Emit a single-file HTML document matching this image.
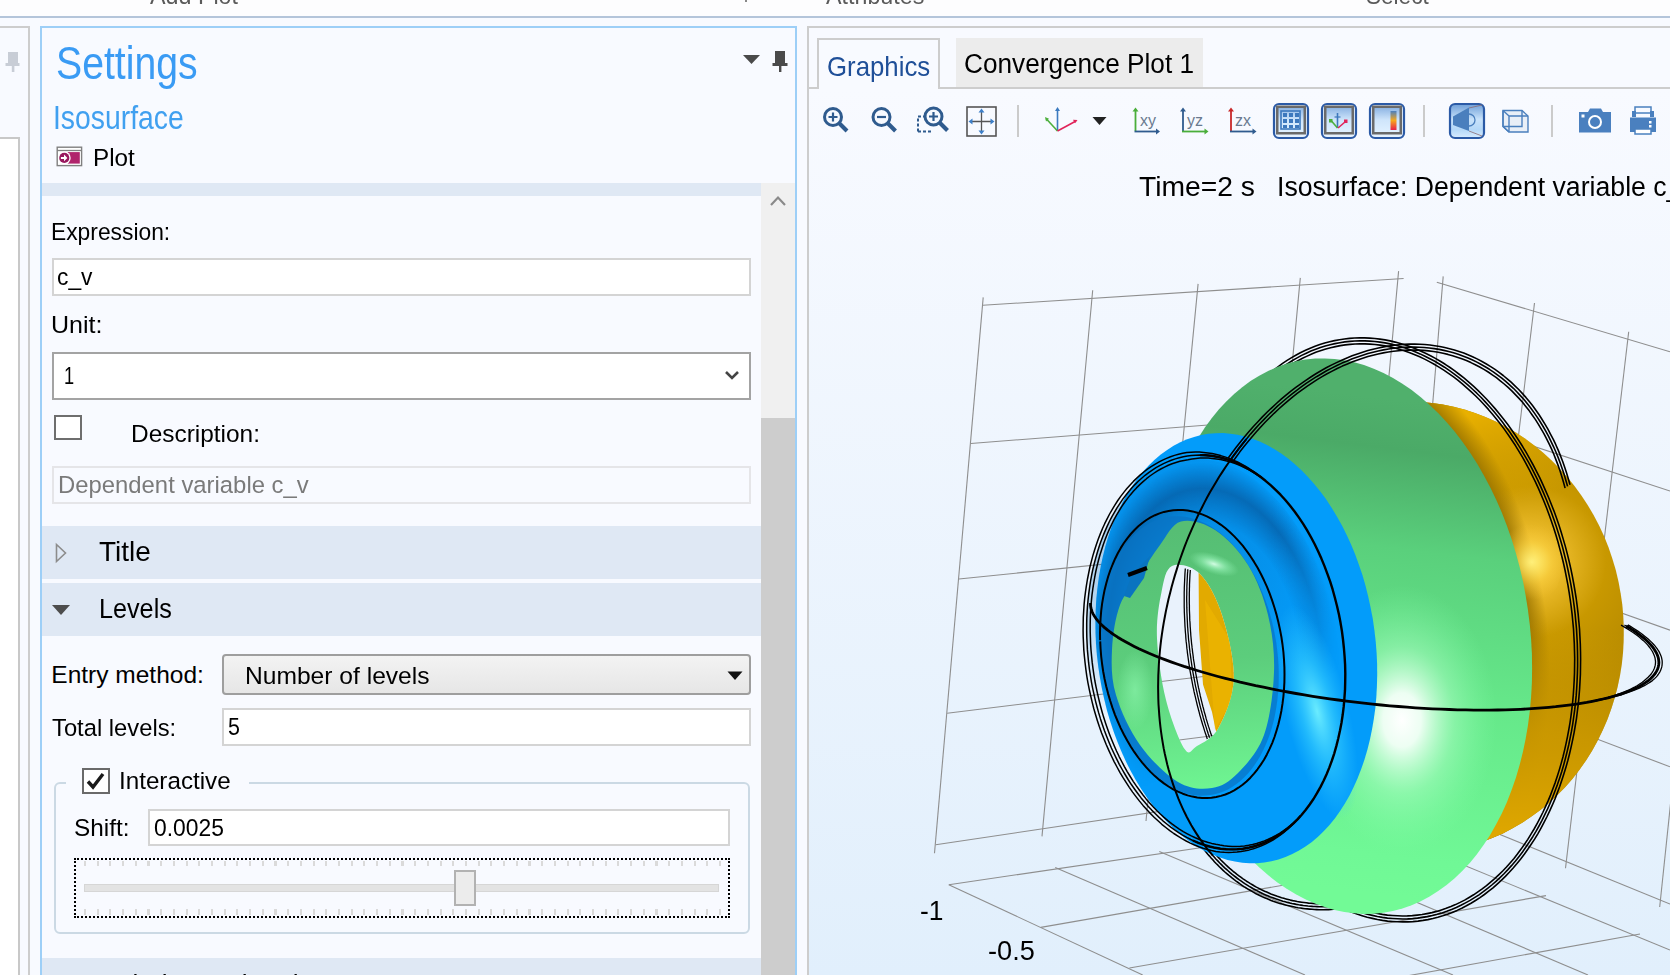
<!DOCTYPE html>
<html><head><meta charset="utf-8">
<style>
*{box-sizing:border-box}
html,body{margin:0;padding:0;width:1670px;height:975px;overflow:hidden;background:#f8faff;font-family:"Liberation Sans",sans-serif;color:#000}
.a{position:absolute}
.t{position:absolute;white-space:pre;line-height:1;transform-origin:0 0}
.fld{position:absolute;background:#fff;border:2px solid #d4d4d4}
</style></head><body>
<!-- top ribbon strip -->
<div class="a" style="left:0;top:0;width:1670px;height:16px;background:#fdfdfe"></div>
<div class="t" style="left:150px;top:-16px;font-size:24px;color:#5a5a5a;transform:scaleX(0.97)">Add Plot</div>
<div class="t" style="left:826px;top:-16px;font-size:24px;color:#5a5a5a;transform:scaleX(0.97)">Attributes</div>
<div class="t" style="left:1366px;top:-16px;font-size:24px;color:#5a5a5a;transform:scaleX(0.94)">Select</div>
<div class="a" style="left:0;top:16px;width:1670px;height:2px;background:#b4c5da"></div>
<div class="a" style="left:745px;top:0;width:2px;height:2px;background:#888"></div>

<!-- left collapsed panel -->
<div class="a" style="left:-4px;top:26px;width:34px;height:960px;border:2px solid #cdcdcd"></div>
<div class="a" style="left:-4px;top:137px;width:24px;height:860px;border:2px solid #c8c8c8;background:#fff"></div>
<svg class="a" style="left:5px;top:51px" width="16" height="22"><rect x="3" y="1" width="10" height="12" fill="#c8cdd6"/><rect x="0.5" y="12" width="14" height="3" fill="#c8cdd6"/><rect x="6.8" y="14" width="2.6" height="7" fill="#c8cdd6"/></svg>

<!-- settings panel -->
<div class="a" style="left:40px;top:26px;width:757px;height:960px;border:2px solid #9dcff7"></div>
<div class="t" style="left:56.2px;top:40px;font-size:46.37px;color:#3a9bf4;transform:scaleX(0.845)">Settings</div>
<div class="t" style="left:53.2px;top:101.6px;font-size:32.41px;color:#40a0f0;transform:scaleX(0.874)">Isosurface</div>
<svg class="a" style="left:56px;top:146px" width="27" height="21"><rect x="1.2" y="1.2" width="24.4" height="18.4" fill="#fff" stroke="#808080" stroke-width="1.4"/><path d="M1.2 4.5H25.6" stroke="#808080" stroke-width="1.3"/><rect x="11.7" y="6.1" width="12.1" height="11.5" fill="#b0246c"/><circle cx="8.3" cy="11.9" r="6.4" fill="#fff"/><circle cx="8.3" cy="11.9" r="5.1" fill="#98185e"/><path d="M4.9 10.9h3.1v-2.3l3.4 3.3-3.4 3.3v-2.3H4.9z" fill="#fff"/></svg>
<div class="t" style="left:93.3px;top:146.6px;font-size:23.5px;color:#000;transform:scaleX(1.032)">Plot</div>
<!-- dropdown + pin -->
<svg class="a" style="left:740px;top:50px" width="50" height="25"><path d="M3 5h17l-8.5 9z" fill="#4a4a4a"/><rect x="35" y="1" width="10" height="13" fill="#4a4a4a"/><rect x="32.5" y="13" width="15" height="3" fill="#4a4a4a"/><rect x="39" y="15" width="2.4" height="7" fill="#4a4a4a"/></svg>

<!-- header band -->
<div class="a" style="left:42px;top:183px;width:719px;height:13px;background:#dfe8f4"></div>
<!-- scrollbar -->
<div class="a" style="left:761px;top:183px;width:34px;height:792px;background:#f0f0f0"></div>
<div class="a" style="left:761px;top:418px;width:34px;height:557px;background:#cdcdcd"></div>
<svg class="a" style="left:768px;top:192px" width="20" height="16"><path d="M3 13L10 5.5 17 13" stroke="#8a8a8a" stroke-width="2.2" fill="none"/></svg>

<div class="t" style="left:51.2px;top:219.6px;font-size:24.5px;transform:scaleX(0.931)">Expression:</div>
<div class="fld" style="left:52px;top:258px;width:699px;height:38px"></div>
<div class="t" style="left:57px;top:264.7px;font-size:24.5px;transform:scaleX(0.93)">c_v</div>
<div class="t" style="left:51px;top:313.1px;font-size:24.5px;transform:scaleX(1.022)">Unit:</div>
<div class="fld" style="left:52px;top:352px;width:699px;height:48px;border-color:#a3a3a3"></div>
<div class="t" style="left:64.3px;top:364.3px;font-size:24.5px;transform:scaleX(0.745)">1</div>
<svg class="a" style="left:724px;top:368px" width="16" height="14"><path d="M2 4l6 6 6-6" stroke="#444" stroke-width="2.6" fill="none"/></svg>
<div class="fld" style="left:54px;top:415px;width:28px;height:25px;border-color:#6e6e6e"></div>
<div class="t" style="left:131.2px;top:421.8px;font-size:24.5px;transform:scaleX(0.997)">Description:</div>
<div class="fld" style="left:52px;top:466px;width:699px;height:38px;border-color:#e5e5e8;background:#f8faff"></div>
<div class="t" style="left:57.5px;top:472.9px;font-size:24.5px;color:#7a7a7a;transform:scaleX(0.974)">Dependent variable c_v</div>

<!-- Title band -->
<div class="a" style="left:42px;top:526px;width:719px;height:53px;background:#dfe8f4"></div>
<svg class="a" style="left:54px;top:542px" width="14" height="22"><path d="M2.5 2.5L11.5 11 2.5 19.5z" fill="none" stroke="#8c8c8c" stroke-width="1.6"/></svg>
<div class="t" style="left:99.3px;top:538.1px;font-size:27.6px;transform:scaleX(1.014)">Title</div>
<div class="a" style="left:42px;top:583px;width:719px;height:53px;background:#dfe8f4"></div>
<svg class="a" style="left:50px;top:602px" width="22" height="14"><path d="M2 3h18L11 13z" fill="#4d4d4d"/></svg>
<div class="t" style="left:98.9px;top:595px;font-size:27.6px;transform:scaleX(0.913)">Levels</div>

<div class="t" style="left:51.3px;top:663.2px;font-size:24.5px">Entry method:</div>
<div class="a" style="left:222px;top:654px;width:529px;height:41px;border:2px solid #9e9e9e;border-radius:4px;background:linear-gradient(#f3f3f3,#e6e6e6)"></div>
<div class="t" style="left:245.3px;top:663.5px;font-size:24.5px;transform:scaleX(1.004)">Number of levels</div>
<svg class="a" style="left:726px;top:670px" width="18" height="12"><path d="M1.5 1.5h15L9 10z" fill="#111"/></svg>
<div class="t" style="left:52.2px;top:716.1px;font-size:24.5px;transform:scaleX(0.97)">Total levels:</div>
<div class="fld" style="left:222px;top:708px;width:529px;height:38px"></div>
<div class="t" style="left:228.4px;top:714.8px;font-size:24.5px;transform:scaleX(0.875)">5</div>

<!-- group box -->
<div class="a" style="left:54px;top:782px;width:696px;height:152px;border:2px solid #cbd9e4;border-radius:6px"></div>
<div class="a" style="left:66px;top:778px;width:183px;height:10px;background:#f8faff"></div>
<div class="fld" style="left:82px;top:768px;width:28px;height:26px;border-color:#6a6a6a"></div>
<svg class="a" style="left:84px;top:770px" width="24" height="22"><path d="M4 11.5l5 5.5 10-13" stroke="#1a1a1a" stroke-width="3.4" fill="none"/></svg>
<div class="t" style="left:119.3px;top:769.3px;font-size:24.5px;transform:scaleX(0.988)">Interactive</div>
<div class="t" style="left:74px;top:815.5px;font-size:24.5px;transform:scaleX(0.994)">Shift:</div>
<div class="fld" style="left:148px;top:809px;width:582px;height:37px"></div>
<div class="t" style="left:153.7px;top:815.5px;font-size:24.5px;transform:scaleX(0.933)">0.0025</div>
<div class="a" style="left:74px;top:858px;width:656px;height:60px;border:2px dotted #000"></div>
<div class="a" style="left:84px;top:861px;width:640px;height:5px;background:repeating-linear-gradient(90deg,#dadada 0 2px,transparent 2px 12.7px)"></div>
<div class="a" style="left:84px;top:909px;width:640px;height:6px;background:repeating-linear-gradient(90deg,#dadada 0 2px,transparent 2px 12.7px)"></div>
<div class="a" style="left:84px;top:884px;width:635px;height:8px;background:#e3e3e3;border:1px solid #d6d6d6"></div>
<div class="a" style="left:454px;top:870px;width:22px;height:36px;background:#ececec;border:2px solid #b2b2b2"></div>

<div class="a" style="left:42px;top:958px;width:719px;height:30px;background:#dfe8f4"></div>
<div class="t" style="left:99.3px;top:971px;font-size:27.6px;transform:scaleX(0.95)">Coloring and Style</div>
<svg class="a" style="left:0;top:0" width="1670" height="975" viewBox="0 0 1670 975"><defs><linearGradient id="bg" x1="0" y1="0" x2="0" y2="1"><stop offset="0" stop-color="#f8faff"/><stop offset="1" stop-color="#e1effc"/></linearGradient><radialGradient id="gold" gradientUnits="userSpaceOnUse" cx="1530" cy="562" r="190" fx="1530" fy="562"><stop offset="0" stop-color="#fff070"/><stop offset="0.12" stop-color="#f0c030"/><stop offset="0.4" stop-color="#c89800"/><stop offset="1" stop-color="#a47c00"/></radialGradient><linearGradient id="goldBot" gradientUnits="userSpaceOnUse" x1="1500" y1="840" x2="1530" y2="620"><stop offset="0" stop-color="#e0a800" stop-opacity="1"/><stop offset="0.5" stop-color="#d8a200" stop-opacity="0.7"/><stop offset="1" stop-color="#d8a200" stop-opacity="0"/></linearGradient><linearGradient id="goldTop" gradientUnits="userSpaceOnUse" x1="1500" y1="405" x2="1530" y2="500"><stop offset="0" stop-color="#e8b000" stop-opacity="1"/><stop offset="1" stop-color="#e8b000" stop-opacity="0"/></linearGradient><linearGradient id="goldDark" gradientUnits="userSpaceOnUse" x1="1490" y1="600" x2="1545" y2="590"><stop offset="0" stop-color="#9a7400" stop-opacity="0.9"/><stop offset="1" stop-color="#9a7400" stop-opacity="0"/></linearGradient><linearGradient id="green" gradientUnits="userSpaceOnUse" x1="1400" y1="400" x2="1340" y2="890"><stop offset="0" stop-color="#50b06c"/><stop offset="0.1" stop-color="#4baa67"/><stop offset="0.3" stop-color="#5ad07c"/><stop offset="0.6" stop-color="#66e88a"/><stop offset="0.92" stop-color="#70f896"/><stop offset="1" stop-color="#72fa96"/></linearGradient><radialGradient id="ghl" gradientUnits="userSpaceOnUse" cx="1405" cy="715" r="110"><stop offset="0" stop-color="#ffffff" stop-opacity="1"/><stop offset="0.25" stop-color="#e8fff0" stop-opacity="0.9"/><stop offset="0.6" stop-color="#a0ffc0" stop-opacity="0.4"/><stop offset="1" stop-color="#80ffa8" stop-opacity="0"/></radialGradient><radialGradient id="ghl2" gradientUnits="userSpaceOnUse" cx="1372" cy="362" r="40"><stop offset="0" stop-color="#a8ffc8" stop-opacity="0.9"/><stop offset="1" stop-color="#a8ffc8" stop-opacity="0"/></radialGradient><radialGradient id="bdark" gradientUnits="userSpaceOnUse" cx="1175" cy="560" r="170"><stop offset="0" stop-color="#0868b4" stop-opacity="0.75"/><stop offset="0.6" stop-color="#0a78c8" stop-opacity="0.35"/><stop offset="1" stop-color="#0a90e8" stop-opacity="0"/></radialGradient><radialGradient id="bhl"><stop offset="0" stop-color="#70f0ff" stop-opacity="0.95"/><stop offset="0.5" stop-color="#40d8ff" stop-opacity="0.5"/><stop offset="1" stop-color="#30c8ff" stop-opacity="0"/></radialGradient><linearGradient id="igreen" gradientUnits="userSpaceOnUse" x1="1190" y1="530" x2="1210" y2="790"><stop offset="0" stop-color="#56be74"/><stop offset="0.5" stop-color="#5ccd7c"/><stop offset="1" stop-color="#6ff592"/></linearGradient><radialGradient id="ighl"><stop offset="0" stop-color="#d8ffe8" stop-opacity="0.95"/><stop offset="0.5" stop-color="#a0f8c0" stop-opacity="0.5"/><stop offset="1" stop-color="#90f0b0" stop-opacity="0"/></radialGradient><radialGradient id="goldBand" gradientUnits="userSpaceOnUse" cx="0" cy="0" r="1" gradientTransform="translate(1344.4 636.1) rotate(-98.03) scale(349.1 231.8)"><stop offset="0" stop-color="#987200" stop-opacity="0.85"/><stop offset="0.8" stop-color="#987200" stop-opacity="0.8"/><stop offset="0.875" stop-color="#987200" stop-opacity="0"/><stop offset="1" stop-color="#987200" stop-opacity="0"/></radialGradient></defs><rect x="809" y="89" width="861" height="886" fill="url(#bg)"/><path d="M983.2 297.4L934.5 853.2" stroke="#8e8e8e" stroke-width="1.1" fill="none"/><path d="M1092.7 290.2L1042 836.4" stroke="#8e8e8e" stroke-width="1.1" fill="none"/><path d="M1198.1 283.9L1146 821" stroke="#8e8e8e" stroke-width="1.1" fill="none"/><path d="M1300.3 277.9L1250 810" stroke="#8e8e8e" stroke-width="1.1" fill="none"/><path d="M1398.6 271.1L1350 800" stroke="#8e8e8e" stroke-width="1.1" fill="none"/><path d="M982.8 305.3L1403.6 278.5" stroke="#8e8e8e" stroke-width="1.1" fill="none"/><path d="M970.8 443.5L1400 410" stroke="#8e8e8e" stroke-width="1.1" fill="none"/><path d="M958.9 579L1390 535" stroke="#8e8e8e" stroke-width="1.1" fill="none"/><path d="M947.1 713.2L1380 660" stroke="#8e8e8e" stroke-width="1.1" fill="none"/><path d="M935.7 844.8L1370 780" stroke="#8e8e8e" stroke-width="1.1" fill="none"/><path d="M1436.8 282.3L1670 351.8" stroke="#8e8e8e" stroke-width="1.1" fill="none"/><path d="M1443.2 276.4L1400 800" stroke="#8e8e8e" stroke-width="1.1" fill="none"/><path d="M1534.5 303L1472 821" stroke="#8e8e8e" stroke-width="1.1" fill="none"/><path d="M1628.7 331.7L1565.5 868.3" stroke="#8e8e8e" stroke-width="1.1" fill="none"/><path d="M1687.7 640L1659.7 907" stroke="#8e8e8e" stroke-width="1.1" fill="none"/><path d="M1440 415.7L1670 491" stroke="#8e8e8e" stroke-width="1.1" fill="none"/><path d="M1440 548.8L1670 630.2" stroke="#8e8e8e" stroke-width="1.1" fill="none"/><path d="M1440 679.3L1670 766.8" stroke="#8e8e8e" stroke-width="1.1" fill="none"/><path d="M1440 810L1670 904" stroke="#8e8e8e" stroke-width="1.1" fill="none"/><path d="M948.8 884.7L1370 822.8" stroke="#8e8e8e" stroke-width="1.1" fill="none"/><path d="M1040.8 927.4L1445 857" stroke="#8e8e8e" stroke-width="1.1" fill="none"/><path d="M1129.4 968L1546 895.6" stroke="#8e8e8e" stroke-width="1.1" fill="none"/><path d="M1300 995.2L1640 934" stroke="#8e8e8e" stroke-width="1.1" fill="none"/><path d="M948.8 884.7L1142.7 975" stroke="#8e8e8e" stroke-width="1.1" fill="none"/><path d="M1055.2 867.6L1305 975" stroke="#8e8e8e" stroke-width="1.1" fill="none"/><path d="M1159.3 851.5L1453 975" stroke="#8e8e8e" stroke-width="1.1" fill="none"/><path d="M1265 838L1588 975" stroke="#8e8e8e" stroke-width="1.1" fill="none"/><path d="M1370 826.5L1670 950" stroke="#8e8e8e" stroke-width="1.1" fill="none"/><path d="M1377.0 404.1L1387.9 402.7L1398.8 401.8L1409.8 401.6L1420.8 401.9L1431.8 402.9L1442.7 404.5L1453.6 406.7L1464.3 409.5L1474.9 412.9L1485.4 416.9L1495.6 421.5L1505.6 426.7L1515.4 432.3L1524.9 438.6L1534.0 445.3L1542.9 452.5L1551.4 460.2L1559.5 468.4L1567.2 477.0L1574.5 486.0L1581.4 495.4L1587.8 505.2L1593.7 515.3L1599.2 525.7L1604.1 536.3L1608.5 547.3L1612.3 558.4L1615.7 569.7L1618.4 581.2L1620.6 592.9L1622.3 604.6L1623.3 616.3L1623.8 628.1L1623.7 639.9L1623.1 651.7L1621.9 663.4L1620.1 675.0L1617.7 686.4L1614.8 697.7L1611.3 708.8L1607.3 719.7L1602.7 730.3L1597.6 740.7L1592.1 750.7L1586.0 760.4L1579.5 769.7L1572.5 778.7L1565.1 787.2L1557.2 795.3L1549.0 802.9L1540.4 810.0L1531.4 816.6L1522.2 822.8L1512.6 828.3L1502.8 833.4L1492.7 837.8L1482.4 841.7L1471.9 845.0L1461.2 847.7L1450.4 849.8L1439.6 851.3L1428.6 852.1L1417.6 852.4L1406.6 852.0L1395.6 851.0L1384.7 849.4L1373.9 847.2L1363.1 844.4L1352.5 841.0L1342.1 837.0L1331.8 832.4L1321.8 827.3L1312.0 821.6L1302.6 815.4L1293.4 808.6L1284.5 801.4L1276.0 793.7L1267.9 785.5L1260.2 776.9L1252.9 767.9L1246.0 758.5L1239.6 748.8L1233.7 738.7L1228.3 728.3L1223.4 717.6L1219.0 706.7L1215.1 695.5L1211.8 684.2L1209.0 672.7L1206.8 661.1L1205.2 649.4L1204.1 637.6L1203.6 625.8L1203.7 614.0L1204.3 602.2L1205.6 590.6L1207.4 579.0L1209.7 567.5L1212.7 556.2L1216.2 545.1L1220.2 534.2L1224.7 523.6L1229.8 513.3L1235.4 503.2L1241.4 493.5L1248.0 484.2L1254.9 475.3L1262.4 466.8L1270.2 458.7L1278.4 451.1L1287.0 443.9L1296.0 437.3L1305.3 431.2L1314.8 425.6L1324.7 420.6L1334.8 416.1L1345.1 412.2L1355.5 408.9L1366.2 406.2L1377.0 404.1Z" fill="url(#gold)"/><path d="M1377.0 404.1L1387.9 402.7L1398.8 401.8L1409.8 401.6L1420.8 401.9L1431.8 402.9L1442.7 404.5L1453.6 406.7L1464.3 409.5L1474.9 412.9L1485.4 416.9L1495.6 421.5L1505.6 426.7L1515.4 432.3L1524.9 438.6L1534.0 445.3L1542.9 452.5L1551.4 460.2L1559.5 468.4L1567.2 477.0L1574.5 486.0L1581.4 495.4L1587.8 505.2L1593.7 515.3L1599.2 525.7L1604.1 536.3L1608.5 547.3L1612.3 558.4L1615.7 569.7L1618.4 581.2L1620.6 592.9L1622.3 604.6L1623.3 616.3L1623.8 628.1L1623.7 639.9L1623.1 651.7L1621.9 663.4L1620.1 675.0L1617.7 686.4L1614.8 697.7L1611.3 708.8L1607.3 719.7L1602.7 730.3L1597.6 740.7L1592.1 750.7L1586.0 760.4L1579.5 769.7L1572.5 778.7L1565.1 787.2L1557.2 795.3L1549.0 802.9L1540.4 810.0L1531.4 816.6L1522.2 822.8L1512.6 828.3L1502.8 833.4L1492.7 837.8L1482.4 841.7L1471.9 845.0L1461.2 847.7L1450.4 849.8L1439.6 851.3L1428.6 852.1L1417.6 852.4L1406.6 852.0L1395.6 851.0L1384.7 849.4L1373.9 847.2L1363.1 844.4L1352.5 841.0L1342.1 837.0L1331.8 832.4L1321.8 827.3L1312.0 821.6L1302.6 815.4L1293.4 808.6L1284.5 801.4L1276.0 793.7L1267.9 785.5L1260.2 776.9L1252.9 767.9L1246.0 758.5L1239.6 748.8L1233.7 738.7L1228.3 728.3L1223.4 717.6L1219.0 706.7L1215.1 695.5L1211.8 684.2L1209.0 672.7L1206.8 661.1L1205.2 649.4L1204.1 637.6L1203.6 625.8L1203.7 614.0L1204.3 602.2L1205.6 590.6L1207.4 579.0L1209.7 567.5L1212.7 556.2L1216.2 545.1L1220.2 534.2L1224.7 523.6L1229.8 513.3L1235.4 503.2L1241.4 493.5L1248.0 484.2L1254.9 475.3L1262.4 466.8L1270.2 458.7L1278.4 451.1L1287.0 443.9L1296.0 437.3L1305.3 431.2L1314.8 425.6L1324.7 420.6L1334.8 416.1L1345.1 412.2L1355.5 408.9L1366.2 406.2L1377.0 404.1Z" fill="url(#goldTop)"/><path d="M1377.0 404.1L1387.9 402.7L1398.8 401.8L1409.8 401.6L1420.8 401.9L1431.8 402.9L1442.7 404.5L1453.6 406.7L1464.3 409.5L1474.9 412.9L1485.4 416.9L1495.6 421.5L1505.6 426.7L1515.4 432.3L1524.9 438.6L1534.0 445.3L1542.9 452.5L1551.4 460.2L1559.5 468.4L1567.2 477.0L1574.5 486.0L1581.4 495.4L1587.8 505.2L1593.7 515.3L1599.2 525.7L1604.1 536.3L1608.5 547.3L1612.3 558.4L1615.7 569.7L1618.4 581.2L1620.6 592.9L1622.3 604.6L1623.3 616.3L1623.8 628.1L1623.7 639.9L1623.1 651.7L1621.9 663.4L1620.1 675.0L1617.7 686.4L1614.8 697.7L1611.3 708.8L1607.3 719.7L1602.7 730.3L1597.6 740.7L1592.1 750.7L1586.0 760.4L1579.5 769.7L1572.5 778.7L1565.1 787.2L1557.2 795.3L1549.0 802.9L1540.4 810.0L1531.4 816.6L1522.2 822.8L1512.6 828.3L1502.8 833.4L1492.7 837.8L1482.4 841.7L1471.9 845.0L1461.2 847.7L1450.4 849.8L1439.6 851.3L1428.6 852.1L1417.6 852.4L1406.6 852.0L1395.6 851.0L1384.7 849.4L1373.9 847.2L1363.1 844.4L1352.5 841.0L1342.1 837.0L1331.8 832.4L1321.8 827.3L1312.0 821.6L1302.6 815.4L1293.4 808.6L1284.5 801.4L1276.0 793.7L1267.9 785.5L1260.2 776.9L1252.9 767.9L1246.0 758.5L1239.6 748.8L1233.7 738.7L1228.3 728.3L1223.4 717.6L1219.0 706.7L1215.1 695.5L1211.8 684.2L1209.0 672.7L1206.8 661.1L1205.2 649.4L1204.1 637.6L1203.6 625.8L1203.7 614.0L1204.3 602.2L1205.6 590.6L1207.4 579.0L1209.7 567.5L1212.7 556.2L1216.2 545.1L1220.2 534.2L1224.7 523.6L1229.8 513.3L1235.4 503.2L1241.4 493.5L1248.0 484.2L1254.9 475.3L1262.4 466.8L1270.2 458.7L1278.4 451.1L1287.0 443.9L1296.0 437.3L1305.3 431.2L1314.8 425.6L1324.7 420.6L1334.8 416.1L1345.1 412.2L1355.5 408.9L1366.2 406.2L1377.0 404.1Z" fill="url(#goldBand)"/><path d="M1377.0 404.1L1387.9 402.7L1398.8 401.8L1409.8 401.6L1420.8 401.9L1431.8 402.9L1442.7 404.5L1453.6 406.7L1464.3 409.5L1474.9 412.9L1485.4 416.9L1495.6 421.5L1505.6 426.7L1515.4 432.3L1524.9 438.6L1534.0 445.3L1542.9 452.5L1551.4 460.2L1559.5 468.4L1567.2 477.0L1574.5 486.0L1581.4 495.4L1587.8 505.2L1593.7 515.3L1599.2 525.7L1604.1 536.3L1608.5 547.3L1612.3 558.4L1615.7 569.7L1618.4 581.2L1620.6 592.9L1622.3 604.6L1623.3 616.3L1623.8 628.1L1623.7 639.9L1623.1 651.7L1621.9 663.4L1620.1 675.0L1617.7 686.4L1614.8 697.7L1611.3 708.8L1607.3 719.7L1602.7 730.3L1597.6 740.7L1592.1 750.7L1586.0 760.4L1579.5 769.7L1572.5 778.7L1565.1 787.2L1557.2 795.3L1549.0 802.9L1540.4 810.0L1531.4 816.6L1522.2 822.8L1512.6 828.3L1502.8 833.4L1492.7 837.8L1482.4 841.7L1471.9 845.0L1461.2 847.7L1450.4 849.8L1439.6 851.3L1428.6 852.1L1417.6 852.4L1406.6 852.0L1395.6 851.0L1384.7 849.4L1373.9 847.2L1363.1 844.4L1352.5 841.0L1342.1 837.0L1331.8 832.4L1321.8 827.3L1312.0 821.6L1302.6 815.4L1293.4 808.6L1284.5 801.4L1276.0 793.7L1267.9 785.5L1260.2 776.9L1252.9 767.9L1246.0 758.5L1239.6 748.8L1233.7 738.7L1228.3 728.3L1223.4 717.6L1219.0 706.7L1215.1 695.5L1211.8 684.2L1209.0 672.7L1206.8 661.1L1205.2 649.4L1204.1 637.6L1203.6 625.8L1203.7 614.0L1204.3 602.2L1205.6 590.6L1207.4 579.0L1209.7 567.5L1212.7 556.2L1216.2 545.1L1220.2 534.2L1224.7 523.6L1229.8 513.3L1235.4 503.2L1241.4 493.5L1248.0 484.2L1254.9 475.3L1262.4 466.8L1270.2 458.7L1278.4 451.1L1287.0 443.9L1296.0 437.3L1305.3 431.2L1314.8 425.6L1324.7 420.6L1334.8 416.1L1345.1 412.2L1355.5 408.9L1366.2 406.2L1377.0 404.1Z" fill="url(#goldBot)"/><radialGradient id="ghlt" gradientUnits="userSpaceOnUse" cx="1532" cy="562" r="38"><stop offset="0" stop-color="#fff07a" stop-opacity="1"/><stop offset="0.5" stop-color="#f8d040" stop-opacity="0.6"/><stop offset="1" stop-color="#f0c030" stop-opacity="0"/></radialGradient><ellipse cx="1532" cy="562" rx="30" ry="45" fill="url(#ghlt)"/><path d="M1260.2 390.3L1264.1 386.4L1268.1 382.6L1272.1 378.9L1276.3 375.5L1280.5 372.2L1284.7 369.0L1289.1 366.1L1293.5 363.3L1298.0 360.7L1302.5 358.3L1307.1 356.1L1311.7 354.0L1316.4 352.1L1321.1 350.5L1325.8 349.0L1330.6 347.7L1335.5 346.6L1340.3 345.6L1345.2 344.9L1350.1 344.4L1355.1 344.0L1360.0 343.9L1365.0 343.9L1370.0 344.1L1375.0 344.5L1380.0 345.1L1385.0 345.9L1390.0 346.9L1394.9 348.1L1399.9 349.5L1404.9 351.0L1409.8 352.8L1414.8 354.7L1419.7 356.8L1424.6 359.1L1429.4 361.6L1434.2 364.3L1439.0 367.1L1443.8 370.1L1448.5 373.3L1453.2 376.7L1457.8 380.2L1462.3 383.9L1466.8 387.8L1471.3 391.8L1475.7 396.0L1480.0 400.3L1484.2 404.8L1488.4 409.4L1492.5 414.2L1496.6 419.2L1500.6 424.2L1504.4 429.4L1508.2 434.8L1511.9 440.3L1515.6 445.8L1519.1 451.6L1522.6 457.4L1525.9 463.3L1529.1 469.4L1532.3 475.6L1535.4 481.8L1538.3 488.2L1541.1 494.6L1543.9 501.2L1546.5 507.8L1549.0 514.5L1551.4 521.3L1553.7 528.1L1555.9 535.1L1558.0 542.0L1559.9 549.1L1561.8 556.2L1563.5 563.3L1565.1 570.5L1566.5 577.7L1567.9 584.9L1569.1 592.2L1570.2 599.5L1571.2 606.8L1572.1 614.1L1572.8 621.5L1573.5 628.8L1573.9 636.2L1574.3 643.5L1574.5 650.9L1574.7 658.2L1574.6 665.5L1574.5 672.8L1574.2 680.1L1573.8 687.3L1573.3 694.5L1572.7 701.6L1571.9 708.7L1571.0 715.8L1570.0 722.8L1568.8 729.7L1567.5 736.6L1566.1 743.4L1564.6 750.2L1563.0 756.8L1561.2 763.4L1559.3 769.9L1557.3 776.3L1555.2 782.6L1552.9 788.8L1550.6 794.9L1548.1 800.9L1545.5 806.7L1542.8 812.5L1540.0 818.1L1537.1 823.6L1534.1 829.0L1531.0 834.2L1527.8 839.4L1524.5 844.3L1521.1 849.1L1517.6 853.8L1514.0 858.4L1510.3 862.7L1506.5 867.0L1502.7 871.0L1498.7 874.9L1494.7 878.7L1490.6 882.2L1486.5 885.6L1482.2 888.9L1477.9 891.9L1473.6 894.8L1469.1 897.5L1464.6 900.1L1460.1 902.4L1455.5 904.6L1450.9 906.5L1446.2 908.3L1441.4 909.9L1436.7 911.4L1431.9 912.6L1427.0 913.6L1422.1 914.5L1417.2 915.1L1412.3 915.6L1407.4 915.9L1402.4 916.0L1397.4 915.8L1392.4 915.5L1387.4 915.1L1382.4 914.4L1377.5 913.5L1372.5 912.4L1367.5 911.2L1362.5 909.7L1357.5 908.1L1352.6 906.3L1347.7 904.3L1342.8 902.1L1337.9 899.7L1333.1 897.2L1328.2 894.4L1323.5 891.5" stroke="#000" stroke-width="1.6" fill="none" stroke-linejoin="round"/><path d="M1258.8 387.7L1262.8 383.7L1266.8 379.9L1270.9 376.2L1275.1 372.7L1279.4 369.4L1283.7 366.2L1288.1 363.3L1292.5 360.5L1297.1 357.9L1301.6 355.4L1306.3 353.2L1310.9 351.1L1315.7 349.2L1320.4 347.5L1325.2 346.0L1330.1 344.7L1335.0 343.6L1339.9 342.7L1344.8 341.9L1349.8 341.4L1354.8 341.0L1359.8 340.9L1364.8 340.9L1369.9 341.1L1374.9 341.5L1379.9 342.1L1385.0 342.9L1390.0 343.9L1395.1 345.1L1400.1 346.5L1405.1 348.1L1410.1 349.8L1415.1 351.7L1420.1 353.9L1425.0 356.2L1429.9 358.7L1434.8 361.3L1439.7 364.2L1444.5 367.2L1449.2 370.4L1454.0 373.8L1458.6 377.3L1463.3 381.1L1467.8 384.9L1472.3 389.0L1476.8 393.2L1481.2 397.5L1485.5 402.1L1489.7 406.7L1493.9 411.6L1498.0 416.5L1502.0 421.6L1506.0 426.9L1509.9 432.3L1513.6 437.8L1517.3 443.4L1520.9 449.2L1524.4 455.1L1527.9 461.1L1531.2 467.2L1534.4 473.4L1537.5 479.7L1540.5 486.2L1543.4 492.7L1546.2 499.3L1548.9 506.0L1551.5 512.8L1554.0 519.7L1556.3 526.6L1558.5 533.6L1560.7 540.7L1562.7 547.8L1564.5 555.0L1566.3 562.2L1567.9 569.5L1569.4 576.9L1570.8 584.2L1572.1 591.6L1573.2 599.0L1574.2 606.4L1575.1 613.9L1575.8 621.4L1576.5 628.8L1576.9 636.3L1577.3 643.7L1577.5 651.2L1577.6 658.6L1577.6 666.1L1577.4 673.5L1577.1 680.8L1576.7 688.2L1576.2 695.4L1575.5 702.7L1574.7 709.9L1573.7 717.0L1572.7 724.1L1571.5 731.2L1570.1 738.1L1568.7 745.0L1567.1 751.8L1565.4 758.5L1563.6 765.2L1561.7 771.7L1559.6 778.2L1557.4 784.6L1555.1 790.8L1552.7 797.0L1550.2 803.0L1547.6 808.9L1544.8 814.7L1542.0 820.4L1539.0 826.0L1536.0 831.4L1532.8 836.7L1529.5 841.8L1526.1 846.8L1522.7 851.7L1519.1 856.4L1515.5 861.0L1511.7 865.4L1507.9 869.6L1504.0 873.7L1500.0 877.6L1496.0 881.4L1491.8 885.0L1487.6 888.4L1483.3 891.7L1479.0 894.8L1474.5 897.7L1470.1 900.4L1465.5 902.9L1460.9 905.3L1456.3 907.5L1451.6 909.5L1446.8 911.3L1442.1 912.9L1437.2 914.3L1432.4 915.5L1427.5 916.6L1422.5 917.4L1417.6 918.1L1412.6 918.6L1407.6 918.9L1402.6 919.0L1397.6 918.8L1392.5 918.5L1387.5 918.1L1382.4 917.4L1377.4 916.5L1372.4 915.4L1367.3 914.2L1362.3 912.7L1357.3 911.1L1352.3 909.3L1347.3 907.3L1342.3 905.1L1337.4 902.7L1332.5 900.1L1327.6 897.4L1322.8 894.5" stroke="#000" stroke-width="1.6" fill="none" stroke-linejoin="round"/><path d="M1257.5 385.0L1261.5 381.0L1265.6 377.1L1269.7 373.4L1274.0 369.9L1278.3 366.6L1282.6 363.4L1287.1 360.4L1291.6 357.6L1296.2 355.0L1300.8 352.5L1305.5 350.3L1310.2 348.2L1315.0 346.3L1319.8 344.6L1324.7 343.1L1329.6 341.8L1334.5 340.6L1339.5 339.7L1344.4 339.0L1349.5 338.4L1354.5 338.0L1359.6 337.9L1364.6 337.9L1369.7 338.1L1374.8 338.5L1379.9 339.1L1385.0 339.9L1390.1 340.9L1395.2 342.1L1400.3 343.5L1405.4 345.1L1410.4 346.8L1415.5 348.8L1420.5 350.9L1425.5 353.2L1430.5 355.7L1435.4 358.4L1440.3 361.3L1445.2 364.3L1450.0 367.5L1454.8 370.9L1459.5 374.5L1464.2 378.2L1468.8 382.1L1473.4 386.2L1477.9 390.4L1482.3 394.8L1486.7 399.3L1491.0 404.0L1495.3 408.9L1499.5 413.9L1503.5 419.0L1507.6 424.3L1511.5 429.7L1515.3 435.3L1519.1 441.0L1522.8 446.8L1526.3 452.7L1529.8 458.8L1533.2 465.0L1536.5 471.3L1539.7 477.7L1542.7 484.2L1545.7 490.8L1548.6 497.5L1551.3 504.2L1554.0 511.1L1556.5 518.1L1558.9 525.1L1561.2 532.2L1563.3 539.4L1565.4 546.6L1567.3 553.9L1569.1 561.2L1570.8 568.6L1572.3 576.0L1573.7 583.5L1575.0 591.0L1576.2 598.5L1577.2 606.1L1578.1 613.6L1578.8 621.2L1579.5 628.8L1579.9 636.4L1580.3 644.0L1580.5 651.5L1580.6 659.1L1580.5 666.6L1580.4 674.1L1580.0 681.6L1579.6 689.0L1579.0 696.4L1578.3 703.8L1577.4 711.0L1576.5 718.3L1575.3 725.5L1574.1 732.6L1572.7 739.6L1571.2 746.6L1569.6 753.5L1567.9 760.3L1566.0 767.0L1564.0 773.6L1561.9 780.1L1559.7 786.5L1557.3 792.9L1554.9 799.1L1552.3 805.2L1549.6 811.1L1546.8 817.0L1543.9 822.7L1540.9 828.3L1537.8 833.8L1534.6 839.1L1531.2 844.3L1527.8 849.3L1524.3 854.2L1520.7 859.0L1517.0 863.6L1513.2 868.0L1509.3 872.3L1505.4 876.4L1501.3 880.4L1497.2 884.1L1493.0 887.8L1488.7 891.2L1484.4 894.5L1480.0 897.6L1475.5 900.5L1471.0 903.2L1466.4 905.8L1461.8 908.2L1457.1 910.4L1452.3 912.4L1447.5 914.2L1442.7 915.8L1437.8 917.3L1432.9 918.5L1427.9 919.6L1423.0 920.4L1418.0 921.1L1412.9 921.6L1407.9 921.9L1402.8 921.9L1397.7 921.8L1392.7 921.5L1387.6 921.1L1382.5 920.4L1377.4 919.5L1372.3 918.4L1367.2 917.2L1362.1 915.7L1357.0 914.1L1352.0 912.2L1346.9 910.2L1341.9 908.0L1336.9 905.6L1332.0 903.1L1327.0 900.3L1322.2 897.4" stroke="#000" stroke-width="1.6" fill="none" stroke-linejoin="round"/><path d="M1365.1 897.9L1362.8 898.5L1360.4 899.1L1358.0 899.7L1355.6 900.2L1353.2 900.7L1350.8 901.2L1348.4 901.6L1346.0 902.0L1343.7 902.3L1341.3 902.6L1338.9 902.9L1336.5 903.1L1334.2 903.3L1331.8 903.5L1329.5 903.6L1327.1 903.7L1324.8 903.8L1322.4 903.8L1320.1 903.7L1317.8 903.7L1315.4 903.6L1313.1 903.4L1310.8 903.3L1308.5 903.1L1306.2 902.8L1304.0 902.5L1301.7 902.2L1299.4 901.9L1297.2 901.5L1294.9 901.0L1292.7 900.6L1290.4 900.1L1288.2 899.5L1286.0 898.9L1283.8 898.3L1281.6 897.7L1279.5 897.0L1277.3 896.3L1275.2 895.5L1273.0 894.7L1270.9 893.9L1268.8 893.0L1266.7 892.1L1264.6 891.2L1262.5 890.2L1260.5 889.2L1258.4 888.1L1256.4 887.1L1254.4 886.0L1252.4 884.8L1250.4 883.6L1248.5 882.4L1246.5 881.2L1244.6 879.9L1242.7 878.6L1240.8 877.2L1238.9 875.8L1237.0 874.4L1235.2 872.9L1233.3 871.5L1231.5 869.9L1229.7 868.4L1228.0 866.8L1226.2 865.2L1224.5 863.5L1222.8 861.9L1221.1 860.2L1219.4 858.4L1217.7 856.6L1216.1 854.8L1214.5 853.0L1212.9 851.1L1211.3 849.3L1209.7 847.3L1208.2 845.4L1206.7 843.4L1205.2 841.4L1203.7 839.3L1202.3 837.3L1200.9 835.2" stroke="#000" stroke-width="1.6" fill="none" stroke-linejoin="round"/><path d="M1365.1 900.9L1362.7 901.5L1360.3 902.1L1357.9 902.7L1355.4 903.2L1353.0 903.7L1350.6 904.2L1348.2 904.6L1345.8 905.0L1343.4 905.3L1341.0 905.6L1338.6 905.9L1336.2 906.1L1333.8 906.3L1331.4 906.5L1329.1 906.6L1326.7 906.7L1324.3 906.7L1321.9 906.7L1319.6 906.7L1317.2 906.6L1314.9 906.5L1312.5 906.4L1310.2 906.2L1307.9 906.0L1305.6 905.7L1303.3 905.5L1301.0 905.1L1298.7 904.8L1296.4 904.4L1294.1 903.9L1291.9 903.5L1289.6 902.9L1287.4 902.4L1285.2 901.8L1282.9 901.2L1280.7 900.5L1278.5 899.8L1276.4 899.1L1274.2 898.3L1272.0 897.5L1269.9 896.7L1267.7 895.8L1265.6 894.9L1263.5 894.0L1261.4 893.0L1259.4 892.0L1257.3 890.9L1255.2 889.8L1253.2 888.7L1251.2 887.5L1249.2 886.4L1247.2 885.1L1245.2 883.9L1243.3 882.6L1241.3 881.2L1239.4 879.9L1237.5 878.5L1235.6 877.0L1233.8 875.6L1231.9 874.1L1230.1 872.6L1228.3 871.0L1226.5 869.4L1224.7 867.8L1222.9 866.1L1221.2 864.4L1219.5 862.7L1217.8 860.9L1216.1 859.2L1214.4 857.3L1212.8 855.5L1211.2 853.6L1209.6 851.7L1208.0 849.8L1206.4 847.8L1204.9 845.8L1203.4 843.8L1201.9 841.7L1200.4 839.6L1199.0 837.5" stroke="#000" stroke-width="1.6" fill="none" stroke-linejoin="round"/><path d="M1365.1 903.9L1362.6 904.5L1360.2 905.1L1357.8 905.7L1355.3 906.2L1352.9 906.7L1350.4 907.2L1348.0 907.6L1345.6 908.0L1343.1 908.3L1340.7 908.6L1338.3 908.9L1335.9 909.1L1333.5 909.3L1331.0 909.4L1328.6 909.6L1326.2 909.6L1323.8 909.7L1321.5 909.7L1319.1 909.7L1316.7 909.6L1314.3 909.5L1312.0 909.3L1309.6 909.1L1307.3 908.9L1304.9 908.7L1302.6 908.4L1300.3 908.0L1298.0 907.7L1295.7 907.3L1293.4 906.8L1291.1 906.3L1288.8 905.8L1286.5 905.3L1284.3 904.7L1282.1 904.1L1279.8 903.4L1277.6 902.7L1275.4 901.9L1273.2 901.2L1271.0 900.4L1268.9 899.5L1266.7 898.6L1264.6 897.7L1262.4 896.8L1260.3 895.8L1258.2 894.7L1256.1 893.7L1254.1 892.6L1252.0 891.4L1250.0 890.3L1247.9 889.1L1245.9 887.8L1243.9 886.6L1242.0 885.3L1240.0 883.9L1238.1 882.5L1236.1 881.1L1234.2 879.7L1232.3 878.2L1230.5 876.7L1228.6 875.2L1226.8 873.6L1224.9 872.0L1223.1 870.3L1221.4 868.7L1219.6 867.0L1217.9 865.2L1216.1 863.5L1214.4 861.7L1212.8 859.8L1211.1 858.0L1209.5 856.1L1207.8 854.2L1206.2 852.2L1204.7 850.2L1203.1 848.2L1201.6 846.2L1200.1 844.1L1198.6 842.0L1197.1 839.9" stroke="#000" stroke-width="1.6" fill="none" stroke-linejoin="round"/><path d="M1305.4 359.6L1315.1 358.6L1324.8 358.4L1334.6 358.9L1344.4 360.2L1354.2 362.3L1364.0 365.1L1373.8 368.7L1383.5 372.9L1393.0 377.9L1402.4 383.7L1411.7 390.1L1420.8 397.2L1429.7 404.9L1438.3 413.3L1446.7 422.3L1454.8 431.8L1462.6 442.0L1470.0 452.6L1477.2 463.8L1483.9 475.4L1490.3 487.5L1496.3 500.0L1501.9 512.8L1507.0 526.0L1511.7 539.5L1515.9 553.3L1519.7 567.3L1523.0 581.5L1525.7 595.8L1528.0 610.2L1529.8 624.7L1531.1 639.3L1531.9 653.8L1532.1 668.3L1531.9 682.7L1531.1 697.0L1529.8 711.1L1528.0 725.0L1525.7 738.6L1522.9 752.0L1519.6 765.0L1515.9 777.7L1511.6 790.0L1507.0 801.9L1501.8 813.4L1496.2 824.3L1490.3 834.8L1483.9 844.6L1477.1 854.0L1470.0 862.7L1462.5 870.8L1454.7 878.2L1446.6 885.0L1438.2 891.1L1429.6 896.6L1420.7 901.3L1411.6 905.2L1402.4 908.5L1392.9 910.9L1383.4 912.7L1373.7 913.7L1364.0 913.9L1354.2 913.3L1344.3 912.0L1334.5 910.0L1324.7 907.1L1315.0 903.6L1305.3 899.3L1295.8 894.3L1286.3 888.6L1277.1 882.2L1268.0 875.1L1259.1 867.3L1250.5 859.0L1242.1 850.0L1234.0 840.4L1226.2 830.3L1218.7 819.6L1211.6 808.5L1204.8 796.8L1198.4 784.7L1192.5 772.3L1186.9 759.4L1181.8 746.2L1177.1 732.7L1172.8 719.0L1169.1 705.0L1165.8 690.8L1163.0 676.5L1160.7 662.0L1158.9 647.5L1157.7 633.0L1156.9 618.4L1156.6 604.0L1156.9 589.6L1157.7 575.3L1159.0 561.2L1160.7 547.3L1163.0 533.6L1165.8 520.3L1169.1 507.2L1172.9 494.5L1177.1 482.2L1181.8 470.3L1186.9 458.9L1192.5 447.9L1198.5 437.5L1204.9 427.6L1211.7 418.3L1218.8 409.6L1226.3 401.5L1234.1 394.0L1242.2 387.2L1250.5 381.1L1259.2 375.7L1268.1 371.0L1277.1 367.0L1286.4 363.8L1295.8 361.3L1305.4 359.6Z" fill="url(#green)"/><clipPath id="gclip"><path d="M1305.4 359.6L1315.1 358.6L1324.8 358.4L1334.6 358.9L1344.4 360.2L1354.2 362.3L1364.0 365.1L1373.8 368.7L1383.5 372.9L1393.0 377.9L1402.4 383.7L1411.7 390.1L1420.8 397.2L1429.7 404.9L1438.3 413.3L1446.7 422.3L1454.8 431.8L1462.6 442.0L1470.0 452.6L1477.2 463.8L1483.9 475.4L1490.3 487.5L1496.3 500.0L1501.9 512.8L1507.0 526.0L1511.7 539.5L1515.9 553.3L1519.7 567.3L1523.0 581.5L1525.7 595.8L1528.0 610.2L1529.8 624.7L1531.1 639.3L1531.9 653.8L1532.1 668.3L1531.9 682.7L1531.1 697.0L1529.8 711.1L1528.0 725.0L1525.7 738.6L1522.9 752.0L1519.6 765.0L1515.9 777.7L1511.6 790.0L1507.0 801.9L1501.8 813.4L1496.2 824.3L1490.3 834.8L1483.9 844.6L1477.1 854.0L1470.0 862.7L1462.5 870.8L1454.7 878.2L1446.6 885.0L1438.2 891.1L1429.6 896.6L1420.7 901.3L1411.6 905.2L1402.4 908.5L1392.9 910.9L1383.4 912.7L1373.7 913.7L1364.0 913.9L1354.2 913.3L1344.3 912.0L1334.5 910.0L1324.7 907.1L1315.0 903.6L1305.3 899.3L1295.8 894.3L1286.3 888.6L1277.1 882.2L1268.0 875.1L1259.1 867.3L1250.5 859.0L1242.1 850.0L1234.0 840.4L1226.2 830.3L1218.7 819.6L1211.6 808.5L1204.8 796.8L1198.4 784.7L1192.5 772.3L1186.9 759.4L1181.8 746.2L1177.1 732.7L1172.8 719.0L1169.1 705.0L1165.8 690.8L1163.0 676.5L1160.7 662.0L1158.9 647.5L1157.7 633.0L1156.9 618.4L1156.6 604.0L1156.9 589.6L1157.7 575.3L1159.0 561.2L1160.7 547.3L1163.0 533.6L1165.8 520.3L1169.1 507.2L1172.9 494.5L1177.1 482.2L1181.8 470.3L1186.9 458.9L1192.5 447.9L1198.5 437.5L1204.9 427.6L1211.7 418.3L1218.8 409.6L1226.3 401.5L1234.1 394.0L1242.2 387.2L1250.5 381.1L1259.2 375.7L1268.1 371.0L1277.1 367.0L1286.4 363.8L1295.8 361.3L1305.4 359.6Z" /></clipPath><radialGradient id="ghl3"><stop offset="0" stop-color="#ffffff" stop-opacity="1"/><stop offset="0.2" stop-color="#f4fff8" stop-opacity="0.95"/><stop offset="0.55" stop-color="#b0ffc8" stop-opacity="0.45"/><stop offset="1" stop-color="#80ffa8" stop-opacity="0"/></radialGradient><ellipse cx="1402" cy="720" rx="95" ry="135" fill="url(#ghl3)" clip-path="url(#gclip)"/><path d="M1098.2 666.2L1096.9 655.0L1096.0 643.7L1095.5 632.4L1095.4 621.2L1095.7 610.1L1096.3 599.1L1097.4 588.2L1098.8 577.5L1100.6 566.9L1102.8 556.6L1105.3 546.5L1108.2 536.8L1111.4 527.3L1115.0 518.1L1118.9 509.4L1123.2 500.9L1127.7 492.9L1132.5 485.4L1137.7 478.2L1143.1 471.6L1148.7 465.4L1154.6 459.7L1160.8 454.5L1167.1 449.9L1173.6 445.8L1180.3 442.3L1187.1 439.3L1194.1 436.9L1201.2 435.1L1208.4 433.8L1215.7 433.2L1223.0 433.1L1230.3 433.7L1237.7 434.8L1245.1 436.5L1252.4 438.8L1259.7 441.6L1267.0 445.1L1274.1 449.0L1281.2 453.6L1288.1 458.6L1294.9 464.2L1301.5 470.3L1308.0 476.9L1314.2 483.9L1320.3 491.4L1326.1 499.3L1331.6 507.7L1336.9 516.4L1342.0 525.4L1346.7 534.9L1351.1 544.6L1355.2 554.6L1359.0 564.9L1362.5 575.3L1365.6 586.0L1368.3 596.9L1370.7 607.9L1372.8 619.0L1374.4 630.2L1375.7 641.5L1376.6 652.7L1377.1 664.0L1377.2 675.2L1376.9 686.3L1376.3 697.3L1375.3 708.2L1373.8 719.0L1372.0 729.5L1369.9 739.8L1367.3 749.9L1364.5 759.6L1361.2 769.1L1357.6 778.3L1353.7 787.1L1349.5 795.5L1344.9 803.5L1340.1 811.1L1335.0 818.2L1329.5 824.9L1323.9 831.0L1318.0 836.7L1311.9 841.9L1305.5 846.5L1299.0 850.6L1292.3 854.1L1285.5 857.1L1278.5 859.5L1271.4 861.3L1264.2 862.6L1257.0 863.2L1249.7 863.3L1242.3 862.7L1234.9 861.6L1227.5 859.9L1220.2 857.6L1212.9 854.8L1205.7 851.4L1198.5 847.4L1191.4 842.8L1184.5 837.8L1177.7 832.2L1171.1 826.1L1164.7 819.5L1158.4 812.5L1152.4 805.0L1146.6 797.1L1141.0 788.8L1135.7 780.0L1130.7 771.0L1125.9 761.6L1121.5 751.8L1117.4 741.8L1113.6 731.6L1110.1 721.1L1107.0 710.4L1104.3 699.5L1101.9 688.5L1099.9 677.4L1098.2 666.2Z" fill="#039cfa"/><path d="M1089.3 667.2L1088.1 657.2L1087.2 647.2L1086.7 637.2L1086.5 627.2L1086.7 617.3L1087.2 607.5L1088.0 597.8L1089.2 588.2L1090.7 578.9L1092.6 569.7L1094.8 560.7L1097.3 552.0L1100.1 543.5L1103.2 535.4L1106.6 527.5L1110.4 520.0L1114.3 512.9L1118.6 506.1L1123.1 499.7L1127.9 493.7L1132.9 488.2L1138.1 483.1L1143.5 478.5L1149.1 474.3L1154.8 470.6L1160.7 467.4L1166.8 464.8L1173.0 462.6L1179.3 460.9L1185.7 459.8L1192.1 459.1L1198.6 459.0L1205.2 459.5L1211.7 460.4L1218.3 461.9L1224.9 463.9L1231.4 466.3L1237.8 469.3L1244.2 472.8L1250.5 476.8L1256.7 481.3L1262.8 486.2L1268.7 491.6L1274.5 497.4L1280.1 503.6L1285.5 510.2L1290.7 517.2L1295.7 524.6L1300.5 532.3L1305.0 540.3L1309.3 548.7L1313.3 557.3L1317.0 566.2L1320.5 575.3L1323.6 584.6L1326.5 594.1L1329.0 603.7L1331.2 613.5L1333.1 623.4L1334.6 633.3L1335.8 643.3L1336.7 653.3L1337.2 663.3L1337.4 673.3L1337.2 683.2L1336.7 693.0L1335.9 702.7L1334.7 712.3L1333.2 721.6L1331.3 730.8L1329.1 739.8L1326.6 748.5L1323.8 757.0L1320.7 765.1L1317.3 773.0L1313.6 780.5L1309.6 787.6L1305.3 794.4L1300.8 800.8L1296.1 806.7L1291.1 812.3L1285.9 817.4L1280.5 822.0L1274.9 826.2L1269.1 829.9L1263.2 833.1L1257.1 835.7L1250.9 837.9L1244.6 839.6L1238.3 840.7L1231.8 841.4L1225.3 841.5L1218.8 841.0L1212.2 840.1L1205.6 838.6L1199.1 836.6L1192.6 834.2L1186.1 831.2L1179.7 827.7L1173.4 823.7L1167.2 819.2L1161.1 814.3L1155.2 808.9L1149.4 803.1L1143.8 796.9L1138.4 790.3L1133.2 783.3L1128.2 775.9L1123.4 768.2L1118.9 760.2L1114.6 751.8L1110.6 743.2L1106.9 734.3L1103.4 725.2L1100.3 715.9L1097.5 706.4L1094.9 696.8L1092.7 687.0L1090.9 677.1L1089.3 667.2Z" fill="url(#bdark)" opacity="0.6"/><radialGradient id="bring" gradientUnits="userSpaceOnUse" cx="0" cy="0" r="1" gradientTransform="translate(1216.0 652.2) rotate(172.14) scale(127.6 198.2)"><stop offset="0.66" stop-color="#0660a8" stop-opacity="0"/><stop offset="0.83" stop-color="#0660a8" stop-opacity="0.8"/><stop offset="0.96" stop-color="#0660a8" stop-opacity="0"/><stop offset="1" stop-color="#0660a8" stop-opacity="0"/></radialGradient><linearGradient id="mtl" gradientUnits="userSpaceOnUse" x1="1150" y1="470" x2="1290" y2="700"><stop offset="0" stop-color="#fff"/><stop offset="0.45" stop-color="#fff"/><stop offset="1" stop-color="#000"/></linearGradient><mask id="mTL"><rect x="1000" y="400" width="450" height="500" fill="url(#mtl)"/></mask><path d="M1098.2 666.2L1096.9 655.0L1096.0 643.7L1095.5 632.4L1095.4 621.2L1095.7 610.1L1096.3 599.1L1097.4 588.2L1098.8 577.5L1100.6 566.9L1102.8 556.6L1105.3 546.5L1108.2 536.8L1111.4 527.3L1115.0 518.1L1118.9 509.4L1123.2 500.9L1127.7 492.9L1132.5 485.4L1137.7 478.2L1143.1 471.6L1148.7 465.4L1154.6 459.7L1160.8 454.5L1167.1 449.9L1173.6 445.8L1180.3 442.3L1187.1 439.3L1194.1 436.9L1201.2 435.1L1208.4 433.8L1215.7 433.2L1223.0 433.1L1230.3 433.7L1237.7 434.8L1245.1 436.5L1252.4 438.8L1259.7 441.6L1267.0 445.1L1274.1 449.0L1281.2 453.6L1288.1 458.6L1294.9 464.2L1301.5 470.3L1308.0 476.9L1314.2 483.9L1320.3 491.4L1326.1 499.3L1331.6 507.7L1336.9 516.4L1342.0 525.4L1346.7 534.9L1351.1 544.6L1355.2 554.6L1359.0 564.9L1362.5 575.3L1365.6 586.0L1368.3 596.9L1370.7 607.9L1372.8 619.0L1374.4 630.2L1375.7 641.5L1376.6 652.7L1377.1 664.0L1377.2 675.2L1376.9 686.3L1376.3 697.3L1375.3 708.2L1373.8 719.0L1372.0 729.5L1369.9 739.8L1367.3 749.9L1364.5 759.6L1361.2 769.1L1357.6 778.3L1353.7 787.1L1349.5 795.5L1344.9 803.5L1340.1 811.1L1335.0 818.2L1329.5 824.9L1323.9 831.0L1318.0 836.7L1311.9 841.9L1305.5 846.5L1299.0 850.6L1292.3 854.1L1285.5 857.1L1278.5 859.5L1271.4 861.3L1264.2 862.6L1257.0 863.2L1249.7 863.3L1242.3 862.7L1234.9 861.6L1227.5 859.9L1220.2 857.6L1212.9 854.8L1205.7 851.4L1198.5 847.4L1191.4 842.8L1184.5 837.8L1177.7 832.2L1171.1 826.1L1164.7 819.5L1158.4 812.5L1152.4 805.0L1146.6 797.1L1141.0 788.8L1135.7 780.0L1130.7 771.0L1125.9 761.6L1121.5 751.8L1117.4 741.8L1113.6 731.6L1110.1 721.1L1107.0 710.4L1104.3 699.5L1101.9 688.5L1099.9 677.4L1098.2 666.2Z" fill="url(#bring)" mask="url(#mTL)"/><ellipse cx="1318" cy="712" rx="32" ry="110" transform="rotate(-14 1316 715)" fill="url(#bhl)"/><path d="M1168.3 516.8L1172.9 516.3L1177.5 516.2L1182.1 516.5L1186.8 517.1L1191.5 518.2L1196.2 519.6L1200.8 521.4L1205.5 523.5L1210.1 526.0L1214.6 528.9L1219.0 532.1L1223.4 535.7L1227.7 539.6L1231.9 543.8L1235.9 548.3L1239.9 553.1L1243.7 558.2L1247.3 563.6L1250.8 569.2L1254.1 575.0L1257.2 581.1L1260.2 587.4L1263.0 593.9L1265.5 600.5L1267.9 607.3L1270.0 614.2L1271.9 621.3L1273.6 628.4L1275.0 635.6L1276.3 642.9L1277.2 650.2L1278.0 657.5L1278.5 664.8L1278.7 672.1L1278.7 679.3L1278.5 686.5L1278.0 693.6L1277.3 700.6L1276.3 707.5L1275.1 714.2L1273.7 720.8L1272.0 727.2L1270.1 733.4L1268.0 739.3L1265.6 745.1L1263.1 750.6L1260.3 755.9L1257.4 760.8L1254.2 765.5L1250.9 769.9L1247.5 774.0L1243.8 777.8L1240.0 781.2L1236.1 784.3L1232.1 787.0L1227.9 789.4L1223.6 791.4L1219.2 793.0L1214.8 794.3L1210.3 795.1L1205.7 795.6L1201.1 795.7L1196.4 795.5L1191.7 794.8L1187.0 793.8L1182.4 792.4L1177.7 790.6L1173.1 788.4L1168.5 785.9L1164.0 783.1L1159.5 779.8L1155.1 776.3L1150.8 772.4L1146.7 768.2L1142.6 763.7L1138.7 758.8L1134.9 753.8L1131.2 748.4L1127.7 742.8L1124.4 736.9L1121.3 730.8L1118.3 724.6L1115.6 718.1L1113.0 711.5L1110.7 704.7L1108.5 697.8L1106.6 690.7L1105.0 683.6L1103.5 676.4L1102.3 669.1L1101.3 661.8L1100.6 654.5L1100.1 647.2L1099.8 639.9L1099.8 632.6L1100.1 625.5L1100.5 618.4L1101.3 611.4L1102.2 604.5L1103.4 597.8L1104.9 591.2L1106.6 584.8L1108.5 578.6L1110.6 572.6L1112.9 566.9L1115.5 561.4L1118.2 556.1L1121.2 551.1L1124.3 546.4L1127.6 542.0L1131.1 538.0L1134.7 534.2L1138.5 530.8L1142.4 527.7L1146.5 525.0L1150.6 522.6L1154.9 520.6L1159.3 519.0L1163.7 517.7L1168.3 516.8Z" fill="#0a74c4" opacity="0.75"/><path d="M1181.0 521.5C1190.2 519.0 1203.8 522.8 1215.0 530.0C1226.2 537.2 1239.2 550.8 1248.0 565.0C1256.8 579.2 1263.7 597.2 1268.0 615.0C1272.3 632.8 1274.7 652.0 1274.0 672.0C1273.3 692.0 1270.0 718.2 1264.0 735.0C1258.0 751.8 1246.7 764.2 1238.0 773.0C1229.3 781.8 1222.0 786.5 1212.0 788.0C1202.0 789.5 1190.0 789.2 1178.0 782.0C1166.0 774.8 1150.3 759.5 1140.0 745.0C1129.7 730.5 1120.7 710.8 1116.0 695.0C1111.3 679.2 1111.3 665.0 1112.0 650.0C1112.7 635.0 1115.3 617.5 1120.0 605.0C1124.7 592.5 1133.3 585.0 1140.0 575.0C1146.7 565.0 1153.2 553.9 1160.0 545.0C1166.8 536.1 1171.8 524.0 1181.0 521.5Z" fill="url(#igreen)"/><ellipse cx="1214" cy="564" rx="26" ry="10" transform="rotate(18 1214 564)" fill="url(#ighl)"/><radialGradient id="ighl2"><stop offset="0" stop-color="#90f8b0" stop-opacity="0.6"/><stop offset="1" stop-color="#90f8b0" stop-opacity="0"/></radialGradient><ellipse cx="1135" cy="690" rx="18" ry="40" fill="url(#ighl2)"/><clipPath id="holeclip"><path d="M1172.0 566.0C1178.4 563.0 1191.7 565.8 1200.0 574.0C1208.3 582.2 1216.4 597.6 1222.0 615.0C1227.6 632.4 1234.4 659.7 1233.8 678.5C1233.2 697.3 1224.6 716.5 1218.5 727.7C1212.4 739.0 1202.7 742.5 1197.0 746.0C1191.3 749.5 1189.8 756.7 1184.6 749.0C1179.4 741.3 1170.6 718.4 1166.0 700.0C1161.4 681.6 1157.8 656.5 1157.0 638.5C1156.2 620.5 1159.0 604.1 1161.5 592.0C1164.0 579.9 1165.6 569.0 1172.0 566.0Z"/></clipPath><g clip-path="url(#holeclip)"><rect x="1140" y="550" width="110" height="220" fill="#e9f2fc"/><path d="M1140 684L1250 671M1140 745L1250 731" stroke="#8e8e8e" stroke-width="1"/><path d="M1198.5 560L1260 560L1260 760L1222 760L1212 712L1203 684.6L1199 630Z" fill="#e2aa00"/><path d="M1205 600L1230 640L1232 700L1215 730Z" fill="#f0b800" opacity="0.6"/></g><path d="M1261.6 477.6L1257.6 475.0L1253.6 472.5L1249.5 470.2L1245.4 468.1L1241.3 466.1L1237.2 464.4L1233.1 462.9L1228.9 461.6L1224.8 460.5L1220.6 459.6L1216.5 458.9L1212.3 458.4L1208.2 458.1L1204.1 458.0L1200.0 458.1L1195.9 458.4L1191.9 458.9L1187.9 459.7L1183.9 460.4L1179.9 461.3L1176.0 462.5L1172.1 463.8L1168.3 465.3L1164.5 467.1L1160.8 469.0L1157.1 471.1L1153.5 473.5L1149.9 476.0L1146.5 478.7L1143.1 481.6L1139.8 484.6L1136.5 487.9L1133.4 491.3L1130.3 494.9L1127.4 498.6L1124.5 502.5L1121.7 506.6L1119.1 510.8L1116.5 515.2L1114.0 519.7L1111.7 524.3L1109.4 529.1L1107.3 534.0L1105.3 539.1L1103.4 544.2L1101.7 549.5L1100.0 554.8L1098.5 560.3L1097.1 565.9L1095.8 571.5L1094.7 577.3L1093.7 583.1L1092.8 588.9L1092.0 594.9L1091.4 600.8L1090.9 606.9L1090.5 613.0L1090.3 619.1L1090.2 625.2L1090.2 631.4L1090.4 637.6L1090.6 643.8L1091.0 650.0L1091.6 656.2L1092.2 662.4L1093.0 668.6L1093.9 674.8L1094.9 681.0L1096.1 687.1L1097.4 693.2L1098.8 699.2L1100.3 705.2L1101.9 711.2L1103.6 717.1L1105.5 722.9L1107.5 728.7L1109.6 734.4L1111.8 740.0L1114.1 745.5L1116.5 751.0L1119.0 756.3L1121.7 761.5L1124.4 766.6L1127.2 771.6L1130.2 776.5L1133.2 781.3L1136.3 785.9L1139.5 790.3L1142.8 794.7L1146.1 798.9L1149.6 802.9L1153.1 806.8L1156.7 810.5L1160.3 814.0L1164.0 817.4L1167.8 820.6L1171.6 823.6L1175.4 826.4L1179.3 829.1L1183.3 831.6L1187.3 833.8L1191.3 835.9L1195.3 837.8L1199.4 839.5L1203.5 841.0L1207.6 842.3L1211.7 843.4L1215.8 844.3L1219.9 845.1L1224.0 845.8L1228.2 846.2L1232.3 846.5L1236.4 846.5L1240.5 846.3L1244.5 845.9L1248.6 845.3L1252.6 844.5L1256.6 843.5L1260.5 842.3L1264.4 840.9L1268.3 839.3L1272.1 837.5L1275.9 835.5L1279.6 833.3L1283.2 830.9L1286.8 828.3L1290.3 825.6L1293.8 822.6L1297.1 819.5L1300.4 816.1" stroke="#000" stroke-width="1.5" fill="none" stroke-linejoin="round"/><path d="M1261.6 477.6L1257.6 474.8L1253.6 472.1L1249.6 469.6L1245.5 467.3L1241.4 465.2L1237.3 463.2L1233.2 461.5L1229.0 460.0L1224.8 458.7L1220.7 457.6L1216.5 456.7L1212.3 456.0L1208.1 455.5L1203.9 455.2L1199.7 455.1L1195.6 455.2L1191.5 455.6L1187.4 456.1L1183.3 456.8L1179.3 457.8L1175.3 458.9L1171.3 460.3L1167.4 461.9L1163.5 463.6L1159.7 465.6L1156.0 467.7L1152.3 470.1L1148.7 472.6L1145.1 475.3L1141.7 478.2L1138.3 481.3L1135.0 484.6L1131.7 488.1L1128.6 491.7L1125.6 495.5L1122.6 499.4L1119.8 503.6L1117.0 507.8L1114.4 512.3L1111.8 516.8L1109.4 521.5L1107.1 526.4L1104.9 531.4L1102.8 536.5L1100.8 541.7L1099.0 547.1L1097.3 552.5L1095.7 558.1L1094.2 563.8L1092.8 569.5L1091.6 575.4L1090.5 581.3L1089.6 587.3L1088.8 593.3L1088.1 599.5L1087.5 605.7L1087.1 611.9L1086.8 618.2L1086.7 624.5L1086.7 630.8L1086.8 637.2L1087.1 643.6L1087.4 649.9L1088.0 656.3L1088.6 662.7L1089.4 669.1L1090.4 675.5L1091.4 681.8L1092.6 688.1L1094.0 694.4L1095.4 700.6L1097.0 706.7L1098.7 712.9L1100.5 718.9L1102.5 724.9L1104.5 730.8L1106.7 736.6L1109.0 742.3L1111.4 748.0L1114.0 753.5L1116.6 758.9L1119.3 764.3L1122.2 769.5L1125.1 774.5L1128.1 779.5L1131.2 784.3L1134.5 789.0L1137.8 793.5L1141.1 797.9L1144.6 802.1L1148.1 806.2L1151.7 810.1L1155.4 813.8L1159.1 817.4L1162.9 820.8L1166.8 824.0L1170.7 827.1L1174.6 829.9L1178.6 832.6L1182.6 835.1L1186.7 837.4L1190.8 839.5L1194.9 841.4L1199.1 843.1L1203.2 844.6L1207.4 845.9L1211.6 847.0L1215.8 847.9L1220.0 848.6L1224.2 849.1L1228.4 849.3L1232.5 849.4L1236.7 849.3L1240.8 848.9L1244.9 848.4L1249.0 847.6L1253.0 846.6L1257.0 845.5L1260.9 844.1L1264.9 842.5L1268.7 840.7L1272.5 838.8L1276.2 836.6L1279.9 834.2L1283.5 831.7L1287.1 828.9L1290.5 826.0L1293.9 822.9L1297.2 819.6L1300.4 816.1" stroke="#000" stroke-width="1.5" fill="none" stroke-linejoin="round"/><path d="M1261.6 477.6L1257.7 474.6L1253.7 471.7L1249.7 469.0L1245.7 466.5L1241.6 464.2L1237.5 462.0L1233.3 460.1L1229.1 458.4L1224.9 456.9L1220.7 455.6L1216.5 454.5L1212.2 453.6L1208.0 452.9L1203.7 452.4L1199.5 452.1L1195.3 452.0L1191.0 452.2L1186.8 452.5L1182.7 453.3L1178.6 454.2L1174.5 455.4L1170.5 456.8L1166.5 458.4L1162.6 460.1L1158.7 462.1L1154.9 464.3L1151.1 466.7L1147.4 469.2L1143.8 472.0L1140.3 474.9L1136.8 478.1L1133.4 481.4L1130.1 484.9L1126.9 488.5L1123.8 492.4L1120.7 496.4L1117.8 500.5L1115.0 504.9L1112.3 509.3L1109.6 514.0L1107.1 518.8L1104.7 523.7L1102.4 528.7L1100.3 533.9L1098.2 539.2L1096.3 544.7L1094.5 550.2L1092.8 555.9L1091.3 561.6L1089.8 567.5L1088.6 573.5L1087.4 579.5L1086.4 585.6L1085.5 591.8L1084.7 598.1L1084.1 604.4L1083.7 610.8L1083.3 617.2L1083.2 623.7L1083.1 630.2L1083.2 636.8L1083.5 643.3L1083.8 649.9L1084.4 656.5L1085.1 663.0L1085.9 669.6L1086.8 676.1L1087.9 682.6L1089.2 689.1L1090.6 695.5L1092.1 701.9L1093.7 708.2L1095.5 714.5L1097.4 720.7L1099.4 726.8L1101.6 732.9L1103.9 738.8L1106.3 744.7L1108.8 750.4L1111.4 756.0L1114.1 761.6L1117.0 767.0L1119.9 772.3L1122.9 777.4L1126.1 782.4L1129.3 787.3L1132.6 792.1L1136.0 796.6L1139.5 801.1L1143.0 805.4L1146.7 809.5L1150.4 813.4L1154.1 817.2L1158.0 820.8L1161.8 824.3L1165.8 827.5L1169.8 830.6L1173.8 833.5L1177.9 836.1L1182.0 838.6L1186.2 841.0L1190.3 843.1L1194.5 845.0L1198.8 846.7L1203.0 848.2L1207.3 849.5L1211.5 850.6L1215.8 851.5L1220.1 852.0L1224.3 852.3L1228.6 852.4L1232.8 852.3L1237.0 852.0L1241.1 851.5L1245.3 850.8L1249.3 849.9L1253.4 848.7L1257.4 847.4L1261.4 845.8L1265.3 844.1L1269.1 842.2L1272.9 840.0L1276.6 837.7L1280.2 835.2L1283.8 832.4L1287.3 829.5L1290.7 826.5L1294.1 823.2L1297.3 819.8L1300.4 816.1" stroke="#000" stroke-width="1.5" fill="none" stroke-linejoin="round"/><path d="M1200.1 455.1L1205.6 455.3L1211.2 455.8L1216.7 456.7L1222.3 458.0L1227.9 459.6L1233.4 461.6L1238.9 463.9L1244.3 466.6L1249.8 469.7L1255.1 473.0L1260.4 476.7L1265.5 480.8L1270.6 485.1L1275.6 489.8L1280.5 494.7L1285.3 500.0L1289.9 505.5L1294.4 511.3L1298.8 517.4L1303.0 523.7L1307.0 530.2L1310.9 537.0L1314.6 544.0L1318.1 551.2L1321.4 558.6L1324.5 566.1L1327.4 573.8L1330.2 581.7L1332.7 589.7L1334.9 597.8L1337.0 606.0L1338.9 614.3L1340.5 622.6L1341.9 631.0L1343.0 639.5L1343.9 648.0L1344.6 656.5L1345.1 664.9L1345.3 673.4L1345.2 681.8L1345.0 690.2L1344.4 698.5L1343.7 706.7L1342.7 714.8L1341.5 722.8L1340.0 730.6L1338.3 738.3L1336.4 745.9L1334.3 753.3L1331.9 760.5L1329.4 767.4L1326.6 774.2L1323.6 780.8L1320.4 787.1L1317.0 793.2L1313.5 799.0L1309.7 804.5L1305.8 809.7L1301.7 814.7L1297.5 819.4L1293.1 823.7L1288.5 827.7L1283.9 831.4L1279.1 834.8L1274.1 837.8L1269.1 840.5L1264.0 842.9L1258.8 844.9L1253.5 846.5L1248.1 847.8L1242.7 848.7L1237.3 849.2L1231.7 849.4L1226.2 849.2L1220.6 848.7L1215.1 847.8L1209.5 846.5L1204.0 844.8L1198.4 842.8L1192.9 840.5" stroke="#000" stroke-width="2.4" fill="none" stroke-linejoin="round"/><path d="M1100.1 640.3L1100.0 632.8L1100.2 625.4L1100.6 618.1L1101.2 610.8L1102.1 603.7L1103.3 596.7L1104.6 589.9L1106.3 583.2L1108.1 576.8L1110.2 570.5L1112.6 564.5L1115.1 558.7L1117.8 553.2L1120.8 547.9L1123.9 543.0L1127.3 538.3L1130.8 534.0L1134.5 530.0L1138.3 526.3L1142.3 523.0L1146.4 520.0L1150.6 517.4L1155.0 515.2L1159.5 513.4L1164.0 511.9L1168.6 510.9L1173.3 510.2L1178.1 509.9L1182.9 510.0L1187.7 510.5L1192.5 511.4L1197.3 512.7L1202.1 514.4L1206.9 516.4L1211.7 518.8L1216.3 521.6L1221.0 524.8L1225.5 528.3L1230.0 532.2L1234.3 536.4L1238.5 540.9L1242.7 545.7L1246.6 550.8L1250.4 556.2L1254.1 561.9L1257.6 567.8L1260.9 574.0L1264.0 580.3L1267.0 586.9L1269.7 593.7L1272.2 600.6L1274.5 607.7L1276.6 614.9L1278.4 622.2L1280.0 629.6L1281.4 637.0L1282.5 644.5L1283.4 652.0L1284.0 659.6L1284.4 667.1L1284.5 674.6L1284.4 682.0L1284.0 689.4L1283.4 696.6L1282.5 703.7L1281.4 710.7L1280.0 717.6L1278.4 724.3L1276.5 730.7L1274.5 737.0L1272.2 743.1L1269.6 748.9L1266.9 754.4L1264.0 759.7L1260.8 764.6L1257.5 769.3L1254.0 773.7L1250.4 777.7L1246.5 781.4L1242.6 784.7L1238.4 787.7L1234.2 790.3L1229.9 792.6L1225.4 794.5L1220.9 795.9L1216.2 797.0L1211.5 797.7L1206.8 798.1L1202.0 798.0L1197.2 797.5L1192.4 796.6L1187.6 795.4L1182.8 793.7L1178.0 791.7L1173.2 789.3L1168.5 786.5L1163.9 783.4L1159.4 779.9L1154.9 776.1L1150.5 771.9L1146.3 767.4L1142.2 762.6L1138.2 757.5L1134.4 752.2L1130.7 746.5L1127.2 740.6L1123.9 734.5L1120.7 728.1L1117.8 721.5L1115.0 714.8L1112.5 707.9L1110.2 700.8L1108.1 693.6L1106.2 686.3L1104.6 679.0L1103.2 671.5L1102.1 664.0L1101.2 656.5L1100.6 649.0L1100.2 641.4" stroke="#000" stroke-width="2.0" fill="none" stroke-linejoin="round"/><path d="M1231.9 462.9L1235.8 457.5L1239.7 452.1L1243.8 446.8L1247.9 441.7L1252.1 436.7L1256.4 431.8L1260.7 427.0L1265.1 422.3L1269.6 417.7L1274.1 413.3L1278.7 409.0L1283.3 404.8L1288.0 400.8L1292.8 396.9L1297.5 393.2L1302.4 389.6L1307.3 386.1L1312.2 382.8L1317.1 379.6L1322.1 376.6L1327.1 373.8L1332.2 371.1L1337.2 368.5L1342.3 366.1L1347.4 363.9L1352.5 361.8L1357.6 359.9L1362.7 358.2L1367.9 356.6L1373.0 355.2L1378.1 354.0L1383.3 352.9L1388.4 352.0L1393.5 351.3L1398.6 350.7L1403.6 350.3L1408.7 350.1L1413.7 350.0L1418.7 350.1L1423.6 350.4L1428.6 350.9L1433.5 351.5L1438.3 352.3L1443.1 353.3L1447.9 354.4L1452.6 355.7L1457.2 357.2L1461.8 358.8L1466.4 360.6L1470.9 362.6L1475.3 364.7L1479.7 367.0L1483.9 369.4L1488.2 372.0L1492.3 374.8L1496.4 377.7L1500.3 380.8L1504.2 384.0L1508.1 387.4L1511.8 390.9L1515.4 394.6L1519.0 398.4L1522.5 402.3L1525.8 406.4L1529.1 410.6L1532.2 415.0L1535.3 419.4L1538.3 424.1L1541.1 428.8L1543.9 433.6L1546.5 438.6L1549.0 443.7L1551.5 448.9L1553.8 454.2L1555.9 459.6L1558.0 465.1L1560.0 470.7L1561.8 476.5L1563.5 482.3L1565.1 488.1" stroke="#000" stroke-width="1.6" fill="none" stroke-linejoin="round"/><path d="M1230.0 460.6L1233.9 455.1L1238.0 449.7L1242.1 444.4L1246.3 439.2L1250.5 434.1L1254.9 429.1L1259.3 424.3L1263.8 419.6L1268.3 415.0L1272.9 410.6L1277.5 406.2L1282.3 402.0L1287.0 398.0L1291.8 394.1L1296.7 390.3L1301.6 386.7L1306.5 383.2L1311.5 379.9L1316.5 376.7L1321.6 373.7L1326.6 370.8L1331.7 368.1L1336.9 365.5L1342.0 363.1L1347.2 360.9L1352.3 358.8L1357.5 356.9L1362.7 355.2L1367.9 353.6L1373.1 352.2L1378.2 351.0L1383.4 349.9L1388.6 349.0L1393.7 348.3L1398.9 347.7L1404.0 347.3L1409.1 347.1L1414.2 347.1L1419.2 347.2L1424.2 347.5L1429.2 348.0L1434.2 348.6L1439.1 349.4L1443.9 350.4L1448.7 351.5L1453.5 352.8L1458.2 354.3L1462.8 356.0L1467.4 357.8L1472.0 359.8L1476.4 361.9L1480.8 364.2L1485.2 366.7L1489.4 369.3L1493.6 372.1L1497.7 375.1L1501.8 378.1L1505.7 381.4L1509.6 384.8L1513.4 388.3L1517.0 392.0L1520.6 395.9L1524.2 399.8L1527.6 404.0L1530.9 408.2L1534.1 412.6L1537.2 417.1L1540.2 421.8L1543.1 426.5L1545.9 431.4L1548.6 436.4L1551.1 441.6L1553.6 446.8L1556.0 452.2L1558.2 457.6L1560.3 463.2L1562.3 468.9L1564.2 474.6L1565.9 480.5L1567.6 486.4" stroke="#000" stroke-width="1.6" fill="none" stroke-linejoin="round"/><path d="M1228.1 458.3L1232.1 452.7L1236.2 447.3L1240.4 441.9L1244.6 436.7L1249.0 431.5L1253.4 426.5L1257.9 421.7L1262.4 416.9L1267.0 412.3L1271.7 407.8L1276.4 403.5L1281.2 399.2L1286.0 395.2L1290.9 391.2L1295.8 387.4L1300.8 383.8L1305.8 380.3L1310.8 377.0L1315.9 373.8L1321.0 370.7L1326.2 367.8L1331.3 365.1L1336.5 362.6L1341.7 360.2L1346.9 357.9L1352.1 355.8L1357.4 353.9L1362.6 352.2L1367.9 350.6L1373.1 349.2L1378.4 348.0L1383.6 346.9L1388.8 346.0L1394.0 345.3L1399.2 344.7L1404.4 344.4L1409.5 344.1L1414.7 344.1L1419.8 344.2L1424.8 344.5L1429.9 345.0L1434.8 345.7L1439.8 346.5L1444.7 347.5L1449.6 348.7L1454.4 350.0L1459.1 351.5L1463.8 353.1L1468.5 355.0L1473.1 357.0L1477.6 359.1L1482.0 361.5L1486.4 364.0L1490.7 366.6L1495.0 369.4L1499.1 372.4L1503.2 375.5L1507.2 378.8L1511.1 382.2L1514.9 385.8L1518.7 389.5L1522.3 393.4L1525.9 397.4L1529.3 401.5L1532.7 405.8L1535.9 410.2L1539.1 414.8L1542.1 419.5L1545.1 424.3L1547.9 429.2L1550.6 434.3L1553.3 439.4L1555.8 444.7L1558.2 450.1L1560.4 455.6L1562.6 461.2L1564.6 467.0L1566.5 472.8L1568.3 478.7L1570.0 484.7" stroke="#000" stroke-width="1.6" fill="none" stroke-linejoin="round"/><path d="M1212.9 855.6L1210.0 852.2L1207.1 848.6L1204.3 845.0L1201.5 841.2L1198.9 837.4L1196.3 833.4L1193.8 829.4L1191.3 825.2L1189.0 821.0L1186.7 816.7L1184.5 812.3L1182.4 807.8L1180.4 803.3L1178.4 798.7L1176.6 793.9L1174.8 789.2L1173.1 784.3L1171.5 779.4L1170.0 774.4L1168.5 769.3L1167.2 764.2L1166.0 759.0L1164.8 753.8L1163.7 748.4L1162.8 743.1L1161.9 737.7L1161.1 732.2L1160.4 726.7L1159.8 721.2L1159.3 715.6L1158.9 709.9L1158.5 704.3L1158.3 698.6L1158.2 692.8L1158.1 687.1L1158.2 681.3L1158.3 675.4L1158.6 669.6L1158.9 663.7L1159.3 657.9L1159.8 652.0L1160.4 646.1L1161.1 640.2L1161.9 634.3L1162.8 628.3L1163.8 622.4L1164.9 616.5L1166.0 610.6L1167.3 604.7L1168.6 598.8L1170.1 592.9L1171.6 587.0L1173.2 581.2L1174.9 575.4L1176.7 569.6L1178.5 563.8L1180.5 558.0L1182.5 552.3L1184.6 546.6L1186.8 541.0L1189.1 535.4L1191.5 529.8L1193.9 524.3L1196.4 518.8L1199.0 513.3L1201.7 508.0L1204.4 502.6L1207.2 497.3L1210.1 492.1L1213.1 487.0L1216.1 481.9L1219.2 476.8L1222.4 471.9L1225.6 467.0L1228.9 462.2L1232.3 457.4L1235.7 452.8L1239.1 448.2L1242.7 443.6L1246.3 439.2" stroke="#000" stroke-width="2.0" fill="none" stroke-linejoin="round"/><path d="M1190.3 570.0L1190.2 572.1L1190.0 574.2L1189.9 576.3L1189.8 578.3L1189.7 580.4L1189.6 582.5L1189.5 584.6L1189.5 586.7L1189.4 588.8L1189.4 590.9L1189.3 593.0L1189.3 595.1L1189.3 597.2L1189.3 599.3L1189.3 601.4L1189.3 603.5L1189.4 605.6L1189.4 607.7L1189.4 609.8L1189.5 611.9L1189.6 614.0L1189.7 616.2L1189.7 618.3L1189.8 620.4L1190.0 622.5L1190.1 624.6L1190.2 626.7L1190.4 628.8L1190.5 631.0L1190.7 633.1L1190.8 635.2L1191.0 637.3L1191.2 639.4L1191.4 641.5L1191.6 643.6L1191.9 645.8L1192.1 647.9L1192.4 650.0L1192.6 652.1L1192.9 654.2L1193.2 656.3L1193.4 658.4L1193.7 660.5L1194.1 662.6L1194.4 664.7L1194.7 666.8L1195.0 668.9L1195.4 671.0L1195.7 673.1L1196.1 675.2L1196.5 677.3L1196.9 679.4L1197.3 681.4L1197.7 683.5L1198.1 685.6L1198.5 687.7L1199.0 689.7L1199.4 691.8L1199.9 693.9L1200.3 695.9L1200.8 698.0L1201.3 700.1L1201.8 702.1L1202.3 704.1L1202.8 706.2L1203.4 708.2L1203.9 710.3L1204.4 712.3L1205.0 714.3L1205.6 716.3L1206.1 718.4L1206.7 720.4L1207.3 722.4L1207.9 724.4L1208.5 726.4L1209.2 728.4L1209.8 730.4L1210.4 732.3L1211.1 734.3L1211.8 736.3" stroke="#000" stroke-width="1.3" fill="none" stroke-linejoin="round"/><path d="M1187.8 569.3L1187.7 571.4L1187.5 573.5L1187.4 575.6L1187.3 577.7L1187.2 579.8L1187.1 581.9L1187.0 584.0L1186.9 586.1L1186.9 588.2L1186.8 590.4L1186.8 592.5L1186.8 594.6L1186.7 596.7L1186.7 598.9L1186.7 601.0L1186.8 603.1L1186.8 605.3L1186.8 607.4L1186.9 609.6L1186.9 611.7L1187.0 613.8L1187.1 616.0L1187.2 618.1L1187.3 620.3L1187.4 622.4L1187.5 624.5L1187.6 626.7L1187.8 628.8L1187.9 631.0L1188.1 633.1L1188.3 635.3L1188.4 637.4L1188.6 639.6L1188.8 641.7L1189.1 643.8L1189.3 646.0L1189.5 648.1L1189.8 650.3L1190.0 652.4L1190.3 654.5L1190.6 656.7L1190.9 658.8L1191.2 660.9L1191.5 663.1L1191.8 665.2L1192.1 667.3L1192.5 669.4L1192.8 671.6L1193.2 673.7L1193.6 675.8L1194.0 677.9L1194.4 680.0L1194.8 682.1L1195.2 684.3L1195.6 686.4L1196.1 688.5L1196.5 690.6L1197.0 692.7L1197.4 694.7L1197.9 696.8L1198.4 698.9L1198.9 701.0L1199.4 703.1L1199.9 705.1L1200.4 707.2L1201.0 709.3L1201.5 711.3L1202.1 713.4L1202.7 715.4L1203.2 717.5L1203.8 719.5L1204.4 721.6L1205.0 723.6L1205.6 725.6L1206.3 727.6L1206.9 729.7L1207.6 731.7L1208.2 733.7L1208.9 735.7L1209.6 737.7" stroke="#000" stroke-width="1.3" fill="none" stroke-linejoin="round"/><path d="M1185.3 568.5L1185.2 570.6L1185.0 572.7L1184.9 574.9L1184.8 577.0L1184.7 579.1L1184.6 581.3L1184.5 583.4L1184.4 585.6L1184.3 587.7L1184.3 589.9L1184.2 592.0L1184.2 594.2L1184.2 596.3L1184.2 598.5L1184.2 600.6L1184.2 602.8L1184.2 605.0L1184.2 607.1L1184.3 609.3L1184.3 611.5L1184.4 613.6L1184.5 615.8L1184.6 618.0L1184.7 620.1L1184.8 622.3L1184.9 624.5L1185.0 626.6L1185.2 628.8L1185.3 631.0L1185.5 633.2L1185.7 635.3L1185.8 637.5L1186.0 639.7L1186.2 641.9L1186.5 644.0L1186.7 646.2L1186.9 648.4L1187.2 650.5L1187.4 652.7L1187.7 654.9L1188.0 657.0L1188.3 659.2L1188.6 661.4L1188.9 663.5L1189.3 665.7L1189.6 667.8L1189.9 670.0L1190.3 672.1L1190.7 674.3L1191.1 676.4L1191.4 678.6L1191.9 680.7L1192.3 682.8L1192.7 685.0L1193.1 687.1L1193.6 689.2L1194.0 691.4L1194.5 693.5L1195.0 695.6L1195.5 697.7L1196.0 699.8L1196.5 701.9L1197.0 704.0L1197.5 706.1L1198.1 708.2L1198.6 710.3L1199.2 712.4L1199.7 714.5L1200.3 716.6L1200.9 718.6L1201.5 720.7L1202.1 722.8L1202.7 724.8L1203.4 726.9L1204.0 728.9L1204.6 730.9L1205.3 733.0L1206.0 735.0L1206.7 737.0L1207.3 739.0" stroke="#000" stroke-width="1.3" fill="none" stroke-linejoin="round"/><path d="M1090.5 603.1L1090.5 605.2L1090.8 607.4L1091.3 609.6L1092.1 611.8L1093.2 614.1L1094.5 616.3L1096.0 618.6L1097.9 620.9L1099.9 623.2L1102.3 625.5L1104.9 627.9L1107.7 630.2L1110.8 632.5L1114.1 634.8L1117.7 637.2L1121.5 639.5L1125.5 641.8L1129.7 644.1L1134.2 646.4L1138.9 648.7L1143.9 651.0L1149.0 653.3L1154.3 655.5L1159.9 657.7L1165.6 659.9L1171.6 662.1L1177.7 664.2L1184.0 666.4L1190.5 668.4L1197.1 670.5L1203.9 672.5L1210.9 674.5L1218.0 676.5L1225.3 678.4L1232.7 680.2L1240.2 682.1L1247.9 683.8L1255.6 685.6L1263.5 687.2L1271.5 688.9L1279.6 690.5L1287.8 692.0L1296.0 693.5L1304.3 694.9L1312.7 696.3L1321.1 697.6L1329.6 698.8L1338.2 700.0L1346.7 701.1L1355.3 702.2L1363.9 703.2L1372.6 704.1L1381.2 705.0L1389.8 705.8L1398.4 706.5L1407.0 707.2L1415.5 707.8L1424.0 708.3L1432.5 708.8L1440.9 709.2L1449.3 709.5L1457.5 709.8L1465.8 709.9L1473.9 710.1L1481.9 710.1L1489.8 710.1L1497.7 710.0L1505.4 709.8L1513.0 709.6L1520.4 709.3L1527.8 708.9L1535.0 708.4L1542.0 707.9L1548.9 707.3L1555.6 706.7L1562.2 705.9L1568.6 705.1L1574.8 704.3L1580.8 703.4L1586.7 702.4L1592.3 701.3L1597.8 700.2L1603.0 699.0L1608.0 697.8L1612.8 696.5L1617.4 695.2L1621.8 693.8L1625.9 692.3L1629.8 690.8L1633.5 689.2L1637.0 687.6L1640.2 685.9L1643.1 684.2L1645.8 682.4L1648.3 680.6L1650.5 678.7L1652.4 676.8L1654.1 674.9L1655.6 672.9L1656.7 670.9L1657.7 668.9L1658.3 666.8L1658.7 664.7L1658.9 662.5L1658.7 660.4L1658.4 658.2L1657.7 655.9L1656.8 653.7L1655.6 651.5L1654.2 649.2L1652.5 646.9L1650.6 644.6L1648.4 642.3L1646.0 640.0L1643.3 637.6L1640.3 635.3L1637.1 633.0L1633.7 630.6L1630.0 628.3L1626.1 626.0" stroke="#000" stroke-width="2.8" fill="none" stroke-linejoin="round"/><path d="M1589.5 701.9L1593.1 701.1L1596.6 700.3L1600.0 699.5L1603.3 698.7L1606.5 697.8L1609.6 696.9L1612.6 696.0L1615.5 695.1L1618.3 694.1L1621.0 693.2L1623.6 692.2L1626.1 691.1L1628.5 690.1L1630.8 689.0L1633.0 687.9L1635.1 686.8L1637.0 685.7L1638.9 684.5L1640.7 683.4L1642.3 682.2L1643.8 681.0L1645.3 679.7L1646.7 678.5L1648.1 677.3L1649.3 676.0L1650.5 674.8L1651.5 673.5L1652.4 672.2L1653.2 670.8L1653.8 669.5L1654.4 668.2L1654.8 666.8L1655.2 665.4L1655.4 664.0L1655.5 662.6L1655.5 661.2L1655.3 659.8L1655.1 658.3L1654.7 656.9L1654.2 655.4L1653.6 653.9L1652.9 652.4L1652.1 651.0L1651.1 649.5L1650.1 648.0L1648.9 646.5L1647.6 644.9L1646.2 643.4L1644.7 641.9L1643.1 640.4L1641.4 638.9L1639.5 637.3L1637.6 635.8L1635.5 634.3L1633.4 632.7L1631.1 631.2L1628.7 629.7L1626.2 628.1L1623.7 626.6L1621.0 625.1" stroke="#000" stroke-width="1.3" fill="none" stroke-linejoin="round"/><path d="M1589.5 701.9L1593.3 701.1L1596.9 700.4L1600.4 699.6L1603.9 698.8L1607.2 698.0L1610.4 697.2L1613.6 696.3L1616.7 695.4L1619.6 694.5L1622.5 693.5L1625.2 692.5L1627.9 691.5L1630.4 690.5L1632.9 689.5L1635.2 688.4L1637.5 687.3L1639.6 686.2L1641.6 685.1L1643.5 683.9L1645.3 682.7L1647.0 681.5L1648.6 680.3L1650.1 679.1L1651.4 677.8L1652.7 676.6L1653.8 675.3L1654.8 674.0L1655.7 672.6L1656.5 671.3L1657.2 669.9L1657.8 668.6L1658.2 667.2L1658.5 665.8L1658.8 664.4L1658.9 663.0L1658.8 661.5L1658.7 660.1L1658.5 658.6L1658.1 657.1L1657.6 655.7L1657.0 654.2L1656.3 652.7L1655.5 651.2L1654.5 649.7L1653.5 648.1L1652.3 646.6L1651.0 645.1L1649.6 643.6L1648.1 642.0L1646.5 640.5L1644.8 638.9L1642.9 637.4L1641.0 635.8L1638.9 634.3L1636.8 632.7L1634.5 631.2L1632.1 629.6L1629.6 628.1L1627.1 626.5L1624.4 625.0" stroke="#000" stroke-width="1.3" fill="none" stroke-linejoin="round"/><path d="M1589.5 701.9L1593.4 701.2L1597.2 700.5L1600.9 699.8L1604.4 699.0L1607.9 698.2L1611.3 697.4L1614.6 696.6L1617.9 695.7L1621.0 694.8L1624.0 693.9L1626.9 692.9L1629.7 692.0L1632.4 691.0L1635.0 689.9L1637.5 688.9L1639.9 687.8L1642.2 686.7L1644.4 685.6L1646.4 684.5L1648.4 683.3L1650.2 682.1L1652.0 680.9L1653.4 679.6L1654.8 678.4L1656.1 677.1L1657.2 675.8L1658.2 674.5L1659.1 673.1L1659.9 671.8L1660.6 670.4L1661.1 669.0L1661.6 667.6L1661.9 666.2L1662.1 664.8L1662.2 663.3L1662.2 661.9L1662.1 660.4L1661.8 658.9L1661.5 657.4L1661.0 655.9L1660.4 654.4L1659.7 652.9L1658.9 651.4L1657.9 649.9L1656.9 648.3L1655.7 646.8L1654.4 645.2L1653.0 643.7L1651.5 642.1L1649.9 640.6L1648.2 639.0L1646.3 637.4L1644.4 635.9L1642.3 634.3L1640.2 632.7L1637.9 631.1L1635.5 629.6L1633.0 628.0L1630.5 626.4L1627.8 624.9" stroke="#000" stroke-width="1.3" fill="none" stroke-linejoin="round"/><path d="M1124 596L1132 574L1150 556L1144 578L1130 598Z" fill="#0a74c0"/><path d="M1128 575L1147 568" stroke="#000" stroke-width="4"/></svg><!-- graphics window chrome -->
<div class="a" style="left:807px;top:26px;width:900px;height:120px;border-top:2px solid #cdcdcd;border-left:2px solid #cdcdcd"></div>
<div class="a" style="left:807px;top:140px;width:2px;height:835px;background:#cdcdcd"></div>
<div class="a" style="left:809px;top:87px;width:861px;height:2px;background:#cdcdcd"></div>
<div class="a" style="left:817px;top:38px;width:123px;height:51px;border:2px solid #cdcdcd;border-bottom:none;background:#f8faff"></div>
<div class="a" style="left:956px;top:38px;width:247px;height:49px;background:#ececec"></div>
<div class="t" style="left:826.8px;top:52.7px;font-size:28px;color:#1f4f98;transform:scaleX(0.921)">Graphics</div>
<div class="t" style="left:963.7px;top:50.9px;font-size:27px;color:#000;transform:scaleX(0.97)">Convergence Plot 1</div>
<!-- toolbar -->
<svg class="a" style="left:809px;top:95px" width="861" height="50" viewBox="809 95 861 50">
 <g stroke="#2f5b8e" fill="none" stroke-width="3">
  <circle cx="833" cy="117" r="8.5"/><path d="M839 123l8 8" stroke-width="4"/><path d="M828.5 117h9M833 112.5v9" stroke-width="2.2"/>
  <circle cx="881.5" cy="117" r="8.5"/><path d="M887.5 123l8 8" stroke-width="4"/><path d="M877 117h9" stroke-width="2.2"/>
  <circle cx="933.5" cy="116.5" r="8.5"/><path d="M939.5 122.5l8 8" stroke-width="4"/><path d="M929 116.5h9M933.5 112v9" stroke-width="2.2"/>
  <path d="M918 131.5h15M918 131.5v-15h6" stroke-width="2" stroke-dasharray="3 2"/>
 </g>
 <rect x="967" y="107" width="29" height="29" fill="none" stroke="#555" stroke-width="1.6"/>
 <path d="M972 121.5h19M981.5 112v19" stroke="#555" stroke-width="1.3"/>
 <path d="M981.5 108.5l-3 4h6zM981.5 134.5l-3-4h6zM968.5 121.5l4-3v6zM994.5 121.5l-4-3v6z" fill="#3d7fc8"/>
 <rect x="1017" y="105" width="2" height="32" fill="#cbcbcb"/>
 <path d="M1057.5 131V109" stroke="#3b7ac0" stroke-width="1.6"/><path d="M1057.5 107l-2.5 4h5z" fill="#3b7ac0"/>
 <path d="M1057.5 131L1046 118.5" stroke="#4caf3c" stroke-width="1.6"/><path d="M1045 117l1 4.5 3-2.8z" fill="#4caf3c"/>
 <path d="M1057.5 131L1076 121" stroke="#e0245a" stroke-width="1.6"/><path d="M1077.5 120l-4.5-0.3 2 3.5z" fill="#e0245a"/>
 <path d="M1092.5 117h14l-7 8z" fill="#222"/>
 <path d="M1135.5 131V110" stroke="#4aae3a" stroke-width="1.8"/><path d="M1135.5 107.5l-3 4h6z" fill="#4aae3a"/>
 <path d="M1134.5 131.5H1158" stroke="#2f5b8e" stroke-width="1.8"/><path d="M1160 131.5l-4-3v6z" fill="#2f5b8e"/>
 <text x="1140" y="126" font-family="Liberation Sans" font-size="16" fill="#6a7a90">xy</text>
 <path d="M1183 131V110" stroke="#2f5b8e" stroke-width="1.8"/><path d="M1183 107.5l-3 4h6z" fill="#2f5b8e"/>
 <path d="M1182 131.5H1206" stroke="#4aae3a" stroke-width="1.8"/><path d="M1208.5 131.5l-4-3v6z" fill="#4aae3a"/>
 <text x="1187" y="126" font-family="Liberation Sans" font-size="16" fill="#6a7a90">yz</text>
 <path d="M1231 131V110" stroke="#c82828" stroke-width="1.8"/><path d="M1231 107.5l-3 4h6z" fill="#c82828"/>
 <path d="M1230 131.5H1254" stroke="#2f5b8e" stroke-width="1.8"/><path d="M1256.5 131.5l-4-3v6z" fill="#2f5b8e"/>
 <text x="1235" y="126" font-family="Liberation Sans" font-size="16" fill="#6a7a90">zx</text>
 <defs>
  <linearGradient id="btn" x1="0" y1="0" x2="0" y2="1"><stop offset="0" stop-color="#8fb6e4"/><stop offset="0.5" stop-color="#cfe5fb"/><stop offset="1" stop-color="#dff0ff"/></linearGradient>
  <linearGradient id="btn2" x1="0" y1="0" x2="0" y2="1"><stop offset="0" stop-color="#6f9fd8"/><stop offset="0.45" stop-color="#c8e2fa"/><stop offset="0.75" stop-color="#b4d8f8"/><stop offset="1" stop-color="#d8ecff"/></linearGradient>
 </defs>
 <g>
  <rect x="1274" y="104" width="34" height="34" rx="5" fill="#e6f2fe" stroke="#2b5aa6" stroke-width="2.2"/>
  <rect x="1276" y="105.5" width="30" height="29" fill="#6a6a6a"/><rect x="1278.5" y="108" width="25" height="24" fill="url(#btn)"/>
  <rect x="1281" y="111" width="19" height="18" fill="none" stroke="#3d78bd" stroke-width="1.6"/>
  <g fill="#3d78bd"><rect x="1283" y="113" width="4" height="4"/><rect x="1289" y="113" width="4" height="4"/><rect x="1295" y="113" width="4" height="4"/><rect x="1283" y="119" width="4" height="4"/><rect x="1289" y="119" width="4" height="4"/><rect x="1295" y="119" width="4" height="4"/><rect x="1283" y="125" width="4" height="3"/><rect x="1289" y="125" width="4" height="3"/><rect x="1295" y="125" width="4" height="3"/></g>
 </g>
 <g>
  <rect x="1322" y="104" width="34" height="34" rx="5" fill="#e6f2fe" stroke="#2b5aa6" stroke-width="2.2"/>
  <rect x="1324" y="105.5" width="30" height="29" fill="#6a6a6a"/><rect x="1326.5" y="108" width="25" height="24" fill="url(#btn)"/>
  <path d="M1337.5 128V113" stroke="#3d78bd" stroke-width="1.6"/><path d="M1334.5 117h6" stroke="#3d78bd" stroke-width="1.2"/>
  <path d="M1337.5 128l-6-7" stroke="#4caf3c" stroke-width="1.6"/><rect x="1329" y="119" width="3.5" height="3.5" fill="#4caf3c"/>
  <path d="M1338 128l7-6" stroke="#e0245a" stroke-width="1.6"/><rect x="1344" y="119.5" width="3.5" height="3.5" fill="#e0245a"/>
 </g>
 <g>
  <defs><linearGradient id="cbar" x1="0" y1="0" x2="0" y2="1"><stop offset="0" stop-color="#4a7fc0"/><stop offset="0.5" stop-color="#f7a81e"/><stop offset="1" stop-color="#e8204a"/></linearGradient></defs>
  <rect x="1370" y="104" width="34" height="34" rx="5" fill="#e6f2fe" stroke="#2b5aa6" stroke-width="2.2"/>
  <rect x="1372" y="105.5" width="30" height="29" fill="#6a6a6a"/><rect x="1374.5" y="108" width="25" height="24" fill="url(#btn)"/>
  <rect x="1390.5" y="111" width="6" height="19" fill="url(#cbar)"/>
 </g>
 <rect x="1423" y="105" width="2" height="32" fill="#cbcbcb"/>
 <g>
  <rect x="1450" y="104" width="34" height="34" rx="5" fill="url(#btn2)" stroke="#2b5aa6" stroke-width="2.2"/>
  <path d="M1453 116.5L1469 107.5V131L1453 125z" fill="#4a7fbd"/>
  <path d="M1469 114a6 6 0 0 1 0 12" stroke="#4a7fbd" stroke-width="1.3" fill="none"/>
  <path d="M1469 108L1482 105M1469 131L1482 136" stroke="#8a6a70" stroke-width="0.8"/>
 </g>
 <g stroke="#4a7fbd" stroke-width="1.4" fill="#dfe8f3">
  <path d="M1503 110.5h19l6 5.5v16h-19l-6-5.5z" fill="#e9eff7"/>
  <path d="M1503 110.5v16l6 5.5M1509 116h19M1509 116v16M1503 110.5l6 5.5M1522 110.5v16h-19" fill="none"/>
 </g>
 <rect x="1551" y="105" width="2" height="32" fill="#cbcbcb"/>
 <g fill="#4a80bf">
  <path d="M1579 112h9l2-3.5h11l2 3.5h8v20.5h-32z"/>
 </g>
 <circle cx="1595" cy="122" r="6" fill="none" stroke="#fff" stroke-width="2"/>
 <rect x="1581.5" y="114.5" width="3" height="3" fill="#fff"/>
 <g fill="#4a80bf">
  <rect x="1635" y="107" width="16" height="6" fill="none" stroke="#4a80bf" stroke-width="1.5"/>
  <rect x="1632" y="111" width="4" height="6"/><rect x="1650" y="111" width="4" height="6"/>
  <rect x="1630" y="117.5" width="26" height="14.5"/>
  <rect x="1635" y="129" width="16" height="5" fill="#fff" stroke="#4a80bf" stroke-width="1.5"/>
  <rect x="1649" y="121" width="2.5" height="2.5" fill="#fff"/><rect x="1649" y="125" width="2.5" height="2.5" fill="#fff"/>
 </g>
</svg>
<div class="t" style="left:1138.9px;top:173.5px;font-size:27px;color:#000;transform:scaleX(1.047)">Time=2 s</div>
<div class="t" style="left:1276.6px;top:173.5px;font-size:27px;color:#000;transform:scaleX(0.987)">Isosurface: Dependent variable c_v</div>
<div class="t" style="left:919.8px;top:898.3px;font-size:27px;color:#000;transform:scaleX(0.977)">-1</div>
<div class="t" style="left:987.5px;top:937.9px;font-size:27px;color:#000;transform:scaleX(1.005)">-0.5</div>

</body></html>
